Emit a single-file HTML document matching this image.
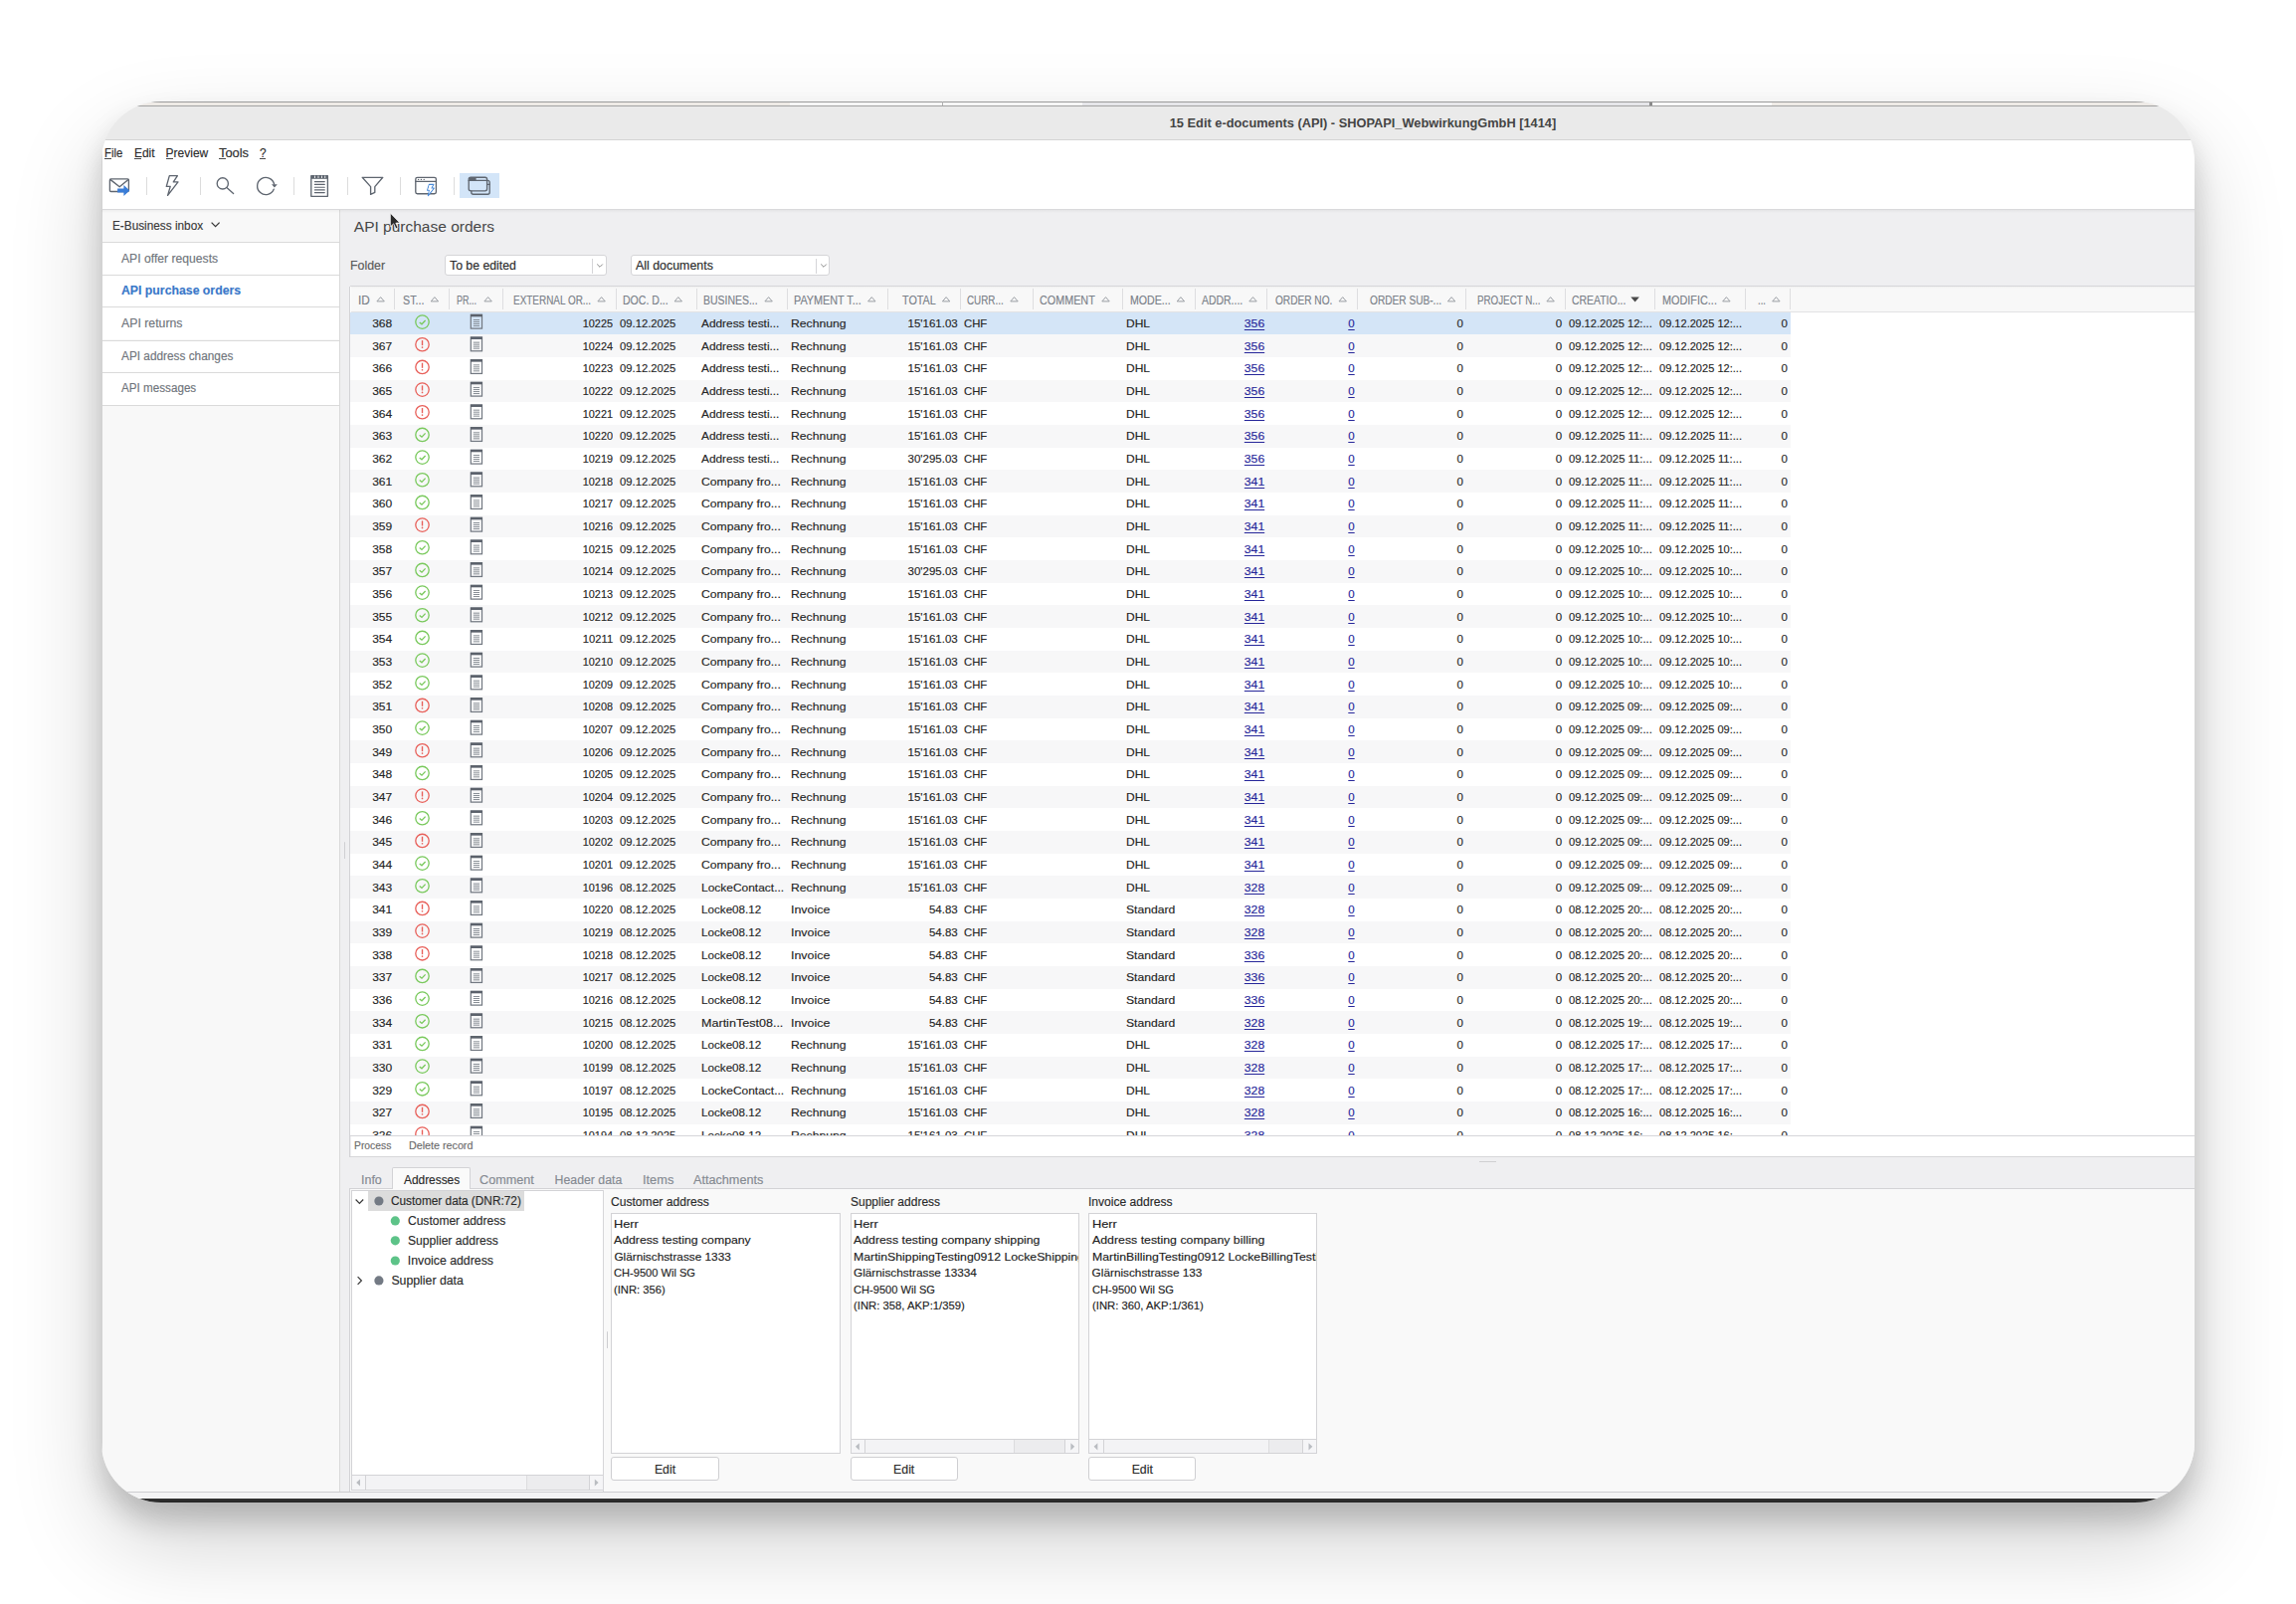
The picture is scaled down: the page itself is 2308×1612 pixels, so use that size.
<!DOCTYPE html>
<html><head><meta charset="utf-8"><title>e-documents</title>
<style>
html,body{margin:0;padding:0;}
body{width:2308px;height:1612px;position:relative;overflow:hidden;background:#ffffff;font-family:"Liberation Sans",sans-serif;}
.b{position:absolute;}
.t{position:absolute;white-space:nowrap;line-height:20px;-webkit-text-stroke:0.15px currentColor;}
#shadow{position:absolute;left:102px;top:102px;width:2104px;height:1408px;border-radius:60px;background:#eee;
 box-shadow:0 18px 28px rgba(0,0,0,0.18),0 41px 92px rgba(0,0,0,0.18);}
#win{position:absolute;left:0;top:0;width:2308px;height:1612px;clip-path:inset(102px 102px 102px 102px round 60px);}
</style></head><body>
<div id="shadow"></div>
<div id="win">
<div class="b" style="left:102.00px;top:102.00px;width:2104.00px;height:1.20px;background:#9c9c9c;"></div>
<div class="b" style="left:102.00px;top:103.20px;width:692.00px;height:2.80px;background:#eeeae6;"></div>
<div class="b" style="left:794.00px;top:103.20px;width:294.00px;height:2.80px;background:#f6f6f6;"></div>
<div class="b" style="left:1088.00px;top:103.20px;width:571.00px;height:2.80px;background:#e6e6e9;"></div>
<div class="b" style="left:1659.00px;top:103.20px;width:122.00px;height:2.80px;background:#f8f8f8;"></div>
<div class="b" style="left:1781.00px;top:103.20px;width:425.00px;height:2.80px;background:#eeeae6;"></div>
<div class="b" style="left:946.80px;top:102.00px;width:1.00px;height:5.00px;background:#b0b0b0;"></div>
<div class="b" style="left:1658.00px;top:102.50px;width:2.50px;height:4.00px;background:#8a8a8a;"></div>
<div class="b" style="left:102.00px;top:106.00px;width:2104.00px;height:1.20px;background:#a3a3a3;"></div>
<div class="b" style="left:102.00px;top:107.20px;width:2104.00px;height:33.30px;background:#eaeaea;"></div>
<div class="b" style="left:102.00px;top:140.20px;width:2104.00px;height:1.00px;background:#d4d4d4;"></div>
<div class="t" style="top:113.80px;font-size:12.8px;color:#444444;font-weight:700;left:1175.76px;-webkit-text-stroke:0;">15 Edit e-documents (API) - SHOPAPI_WebwirkungGmbH [1414]</div>
<div class="b" style="left:102.00px;top:141.00px;width:2104.00px;height:69.00px;background:#ffffff;"></div>
<div class="b" style="left:102.00px;top:209.60px;width:2104.00px;height:1.00px;background:#d9d9db;"></div>
<div class="t" style="top:144.20px;font-size:12px;color:#2c2c2c;left:105.30px;transform:scaleX(0.949);transform-origin:left center;">File</div>
<div class="b" style="left:105.30px;top:158.80px;width:7.00px;height:1.20px;background:#4a4a4a;"></div>
<div class="t" style="top:144.20px;font-size:12px;color:#2c2c2c;left:134.90px;">Edit</div>
<div class="b" style="left:134.90px;top:158.80px;width:7.00px;height:1.20px;background:#4a4a4a;"></div>
<div class="t" style="top:144.20px;font-size:12px;color:#2c2c2c;left:166.60px;">Preview</div>
<div class="b" style="left:166.60px;top:158.80px;width:7.00px;height:1.20px;background:#4a4a4a;"></div>
<div class="t" style="top:144.20px;font-size:12px;color:#2c2c2c;left:219.80px;transform:scaleX(1.073);transform-origin:left center;">Tools</div>
<div class="b" style="left:219.80px;top:158.80px;width:7.00px;height:1.20px;background:#4a4a4a;"></div>
<div class="t" style="top:144.20px;font-size:12px;color:#2c2c2c;left:260.60px;transform:scaleX(0.985);transform-origin:left center;">?</div>
<div class="b" style="left:260.60px;top:158.80px;width:6.40px;height:1.20px;background:#4a4a4a;"></div>
<div class="b" style="left:147.40px;top:178.00px;width:1.00px;height:18.00px;background:#dcdcdc;"></div>
<div class="b" style="left:200.60px;top:178.00px;width:1.00px;height:18.00px;background:#dcdcdc;"></div>
<div class="b" style="left:295.40px;top:178.00px;width:1.00px;height:18.00px;background:#dcdcdc;"></div>
<div class="b" style="left:348.50px;top:178.00px;width:1.00px;height:18.00px;background:#dcdcdc;"></div>
<div class="b" style="left:402.40px;top:178.00px;width:1.00px;height:18.00px;background:#dcdcdc;"></div>
<div class="b" style="left:455.50px;top:178.00px;width:1.00px;height:18.00px;background:#dcdcdc;"></div>
<div class="b" style="left:462.00px;top:174.20px;width:40.10px;height:24.90px;background:#d3e5f8;"></div>

<svg class="b" style="left:0;top:0" width="2308" height="1612" viewBox="0 0 2308 1612">
 <g fill="none" stroke="#5f6670" stroke-width="1.35" stroke-linejoin="round" stroke-linecap="round">
  <!-- mail -->
  <rect x="110.4" y="179.9" width="19" height="12.6" rx="1.2"/>
  <path d="M110.8 180.4 L120.2 187.8 L129 180.4"/>
  <!-- lightning -->
  <path d="M170.3 176.6 L178.4 176.6 L174.3 182.9 L179.0 182.9 L168.6 196.4 L171.2 187.4 L167.3 187.4 Z"/>
  <!-- search -->
  <circle cx="223.8" cy="184.4" r="5.6"/>
  <path d="M227.9 188.6 L234.6 194.6"/>
  <!-- refresh -->
  <path d="M275.6 185.0 A8.6 8.6 0 1 0 275.2 190.2"/>
  <!-- document -->
  <rect x="312.8" y="176.7" width="16.6" height="20.6"/>
  <path d="M316.4 182.6 H326.3 M316.4 185.4 H326.3 M316.4 188.2 H326.3 M316.4 190.9 H326.3 M316.4 193.6 H326.3" stroke-width="1.1"/>
  <!-- filter -->
  <path d="M364.2 178.3 H384.8 L376.8 187.6 V193.4 L372.6 195.4 V187.6 Z"/>
  <!-- window lightning -->
  <rect x="417.8" y="178.3" width="20.6" height="16.4" rx="1.8"/>
  <path d="M417.8 182.3 H438.4"/>
  <!-- windows -->
  <path d="M473.8 191.8 V193.2 A2 2 0 0 0 475.8 195.2 H490.2 A2 2 0 0 0 492.2 193.2 V183.2 A2 2 0 0 0 490.2 181.3 H489.6"/>
  <rect x="471.2" y="178.2" width="18.4" height="13.6" rx="2"/>
  <path d="M471.2 181.4 H489.6 M489.6 185.3 H492.2"/>
 </g>
 <g fill="#5f6670">
  <path d="M273.0 185.3 L278.8 185.3 L275.9 188.6 Z"/>
  <rect x="313" y="176.6" width="16.2" height="3.2"/>
  <circle cx="420.6" cy="180.4" r="0.7"/><circle cx="423.4" cy="180.4" r="0.7"/><circle cx="426.2" cy="180.4" r="0.7"/>
  <rect x="472" y="179" width="6.6" height="2"/>
 </g>
 <g fill="#ffffff"><rect x="316.2" y="176.6" width="0.8" height="2.4"/><rect x="319.6" y="176.6" width="0.8" height="2.4"/><rect x="323" y="176.6" width="0.8" height="2.4"/><rect x="326.4" y="176.6" width="0.8" height="2.4"/></g>
 <!-- blue arrow on mail -->
 <path fill="#3a7dd7" d="M118.1 189.4 H124.4 V185.9 L130.3 191.4 L124.4 196.9 V193.6 H118.1 Z"/>
 <!-- blue lightning -->
 <path fill="none" stroke="#4a8ad8" stroke-width="1.2" stroke-linejoin="round" d="M431.4 185.4 H435.8 L433.6 189.2 H436.2 L430.4 196.6 L431.6 191.2 H429.6 Z"/>
 <path fill="#ffffff" d="M431.6 185.9 H435 L433 189.6 H435.3 L431 195 L432 190.8 H430.2 Z"/>
</svg>
<div class="b" style="left:102.00px;top:210.50px;width:239.50px;height:1299.50px;background:#f8f8f8;"></div>
<div class="b" style="left:341.20px;top:210.50px;width:1.00px;height:1289.50px;background:#d9d9d9;"></div>
<div class="b" style="left:102.00px;top:140.00px;width:1.00px;height:1370.00px;background:#d2d2d2;"></div>
<div class="t" style="top:217.20px;font-size:12px;color:#3a3a3a;left:113.00px;transform:scaleX(0.983);transform-origin:left center;">E-Business inbox</div>
<svg class="b" style="left:211px;top:222px" width="12" height="8" viewBox="0 0 12 8"><path d="M1.6 1.6 L5.6 5.6 L9.6 1.6" fill="none" stroke="#3a3a3a" stroke-width="1.3"/></svg>
<div class="b" style="left:103.00px;top:244.30px;width:238.20px;height:31.70px;background:#ffffff;"></div>
<div class="b" style="left:103.00px;top:277.00px;width:238.20px;height:31.30px;background:#ffffff;"></div>
<div class="b" style="left:103.00px;top:309.30px;width:238.20px;height:32.20px;background:#ffffff;"></div>
<div class="b" style="left:103.00px;top:342.50px;width:238.20px;height:31.50px;background:#ffffff;"></div>
<div class="b" style="left:103.00px;top:375.00px;width:238.20px;height:31.60px;background:#ffffff;"></div>
<div class="b" style="left:103.00px;top:243.30px;width:238.20px;height:1.00px;background:#dadada;"></div>
<div class="b" style="left:103.00px;top:276.00px;width:238.20px;height:1.00px;background:#dadada;"></div>
<div class="b" style="left:103.00px;top:308.30px;width:238.20px;height:1.00px;background:#dadada;"></div>
<div class="b" style="left:103.00px;top:341.50px;width:238.20px;height:1.00px;background:#dadada;"></div>
<div class="b" style="left:103.00px;top:374.00px;width:238.20px;height:1.00px;background:#dadada;"></div>
<div class="b" style="left:103.00px;top:406.60px;width:238.20px;height:1.00px;background:#dadada;"></div>
<div class="t" style="top:250.00px;font-size:12px;color:#70757c;left:122.00px;transform:scaleX(1.014);transform-origin:left center;">API offer requests</div>
<div class="t" style="top:281.90px;font-size:12px;color:#3a78c9;font-weight:700;left:122.00px;transform:scaleX(1.023);transform-origin:left center;">API purchase orders</div>
<div class="t" style="top:315.10px;font-size:12px;color:#70757c;left:122.00px;transform:scaleX(1.025);transform-origin:left center;">API returns</div>
<div class="t" style="top:347.70px;font-size:12px;color:#70757c;left:122.00px;transform:scaleX(0.985);transform-origin:left center;">API address changes</div>
<div class="t" style="top:380.30px;font-size:12px;color:#70757c;left:122.00px;transform:scaleX(0.972);transform-origin:left center;">API messages</div>
<div class="b" style="left:342.20px;top:210.50px;width:1863.80px;height:1289.50px;background:#efeff1;"></div>
<div class="b" style="left:102.00px;top:211.00px;width:2104.00px;height:3.00px;background:linear-gradient(rgba(0,0,0,0.045),rgba(0,0,0,0));"></div>
<div class="t" style="top:217.60px;font-size:15.5px;color:#484848;left:355.80px;-webkit-text-stroke:0;">API purchase orders</div>
<div class="t" style="top:257.20px;font-size:12px;color:#5a5a5a;left:351.60px;transform:scaleX(1.030);transform-origin:left center;">Folder</div>
<div class="b" style="left:446.70px;top:256.30px;width:162.90px;height:21.20px;background:#ffffff;border:1px solid #d5d5d8;box-sizing:border-box;border-radius:3px;"></div>
<div class="b" style="left:595.40px;top:259.50px;width:1.00px;height:15.00px;background:#d5d5d8;"></div>
<svg class="b" style="left:599.4px;top:264px" width="8" height="6" viewBox="0 0 8 6"><path d="M1.2 1.5 L4 4.3 L6.8 1.5" fill="none" stroke="#8a8a8a" stroke-width="1"/></svg>
<div class="t" style="top:257.00px;font-size:12px;color:#2a2a2a;left:452.40px;transform:scaleX(1.022);transform-origin:left center;">To be edited</div>
<div class="b" style="left:633.60px;top:256.30px;width:200.70px;height:21.20px;background:#ffffff;border:1px solid #d5d5d8;box-sizing:border-box;border-radius:3px;"></div>
<div class="b" style="left:820.20px;top:259.50px;width:1.00px;height:15.00px;background:#d5d5d8;"></div>
<svg class="b" style="left:824.2px;top:264px" width="8" height="6" viewBox="0 0 8 6"><path d="M1.2 1.5 L4 4.3 L6.8 1.5" fill="none" stroke="#8a8a8a" stroke-width="1"/></svg>
<div class="t" style="top:257.00px;font-size:12px;color:#2a2a2a;left:639.30px;transform:scaleX(1.033);transform-origin:left center;">All documents</div>
<div class="b" style="left:351.60px;top:287.00px;width:1854.40px;height:854.30px;background:#ffffff;"></div>
<div class="b" style="left:351.60px;top:287.00px;width:1854.40px;height:1.00px;background:#d6d6d9;"></div>
<div class="b" style="left:352.60px;top:288.00px;width:1853.40px;height:25.00px;background:#f8f8f8;"></div>
<div class="b" style="left:352.60px;top:312.60px;width:1853.40px;height:1.00px;background:#e2e2e4;"></div>
<div class="b" style="left:352.60px;top:288.00px;width:1853.40px;height:2.00px;background:linear-gradient(rgba(0,0,0,0.035),rgba(0,0,0,0));"></div>
<div class="b" style="left:396.00px;top:290.00px;width:1.00px;height:20.60px;background:#dedee0;"></div>
<div class="b" style="left:450.80px;top:290.00px;width:1.00px;height:20.60px;background:#dedee0;"></div>
<div class="b" style="left:504.90px;top:290.00px;width:1.00px;height:20.60px;background:#dedee0;"></div>
<div class="b" style="left:618.60px;top:290.00px;width:1.00px;height:20.60px;background:#dedee0;"></div>
<div class="b" style="left:700.00px;top:290.00px;width:1.00px;height:20.60px;background:#dedee0;"></div>
<div class="b" style="left:791.00px;top:290.00px;width:1.00px;height:20.60px;background:#dedee0;"></div>
<div class="b" style="left:892.30px;top:290.00px;width:1.00px;height:20.60px;background:#dedee0;"></div>
<div class="b" style="left:965.10px;top:290.00px;width:1.00px;height:20.60px;background:#dedee0;"></div>
<div class="b" style="left:1037.50px;top:290.00px;width:1.00px;height:20.60px;background:#dedee0;"></div>
<div class="b" style="left:1128.00px;top:290.00px;width:1.00px;height:20.60px;background:#dedee0;"></div>
<div class="b" style="left:1200.80px;top:290.00px;width:1.00px;height:20.60px;background:#dedee0;"></div>
<div class="b" style="left:1273.20px;top:290.00px;width:1.00px;height:20.60px;background:#dedee0;"></div>
<div class="b" style="left:1363.90px;top:290.00px;width:1.00px;height:20.60px;background:#dedee0;"></div>
<div class="b" style="left:1472.90px;top:290.00px;width:1.00px;height:20.60px;background:#dedee0;"></div>
<div class="b" style="left:1572.50px;top:290.00px;width:1.00px;height:20.60px;background:#dedee0;"></div>
<div class="b" style="left:1663.20px;top:290.00px;width:1.00px;height:20.60px;background:#dedee0;"></div>
<div class="b" style="left:1753.60px;top:290.00px;width:1.00px;height:20.60px;background:#dedee0;"></div>
<div class="b" style="left:1799.10px;top:290.00px;width:1.00px;height:20.60px;background:#dedee0;"></div>
<div class="t" style="top:291.60px;font-size:12.2px;color:#7b8189;left:359.80px;transform:scaleX(0.966);transform-origin:left center;">ID</div>
<div class="t" style="top:291.60px;font-size:12.2px;color:#7b8189;left:405.00px;transform:scaleX(0.877);transform-origin:left center;">ST...</div>
<div class="t" style="top:291.60px;font-size:12.2px;color:#7b8189;left:459.20px;transform:scaleX(0.738);transform-origin:left center;">PR...</div>
<div class="t" style="top:291.60px;font-size:12.2px;color:#7b8189;left:515.90px;transform:scaleX(0.816);transform-origin:left center;">EXTERNAL OR...</div>
<div class="t" style="top:291.60px;font-size:12.2px;color:#7b8189;left:626.10px;transform:scaleX(0.865);transform-origin:left center;">DOC. D...</div>
<div class="t" style="top:291.60px;font-size:12.2px;color:#7b8189;left:707.20px;transform:scaleX(0.859);transform-origin:left center;">BUSINES...</div>
<div class="t" style="top:291.60px;font-size:12.2px;color:#7b8189;left:798.00px;transform:scaleX(0.887);transform-origin:left center;">PAYMENT T...</div>
<div class="t" style="top:291.60px;font-size:12.2px;color:#7b8189;left:907.00px;transform:scaleX(0.883);transform-origin:left center;">TOTAL</div>
<div class="t" style="top:291.60px;font-size:12.2px;color:#7b8189;left:972.30px;transform:scaleX(0.808);transform-origin:left center;">CURR...</div>
<div class="t" style="top:291.60px;font-size:12.2px;color:#7b8189;left:1044.80px;transform:scaleX(0.885);transform-origin:left center;">COMMENT</div>
<div class="t" style="top:291.60px;font-size:12.2px;color:#7b8189;left:1135.50px;transform:scaleX(0.871);transform-origin:left center;">MODE...</div>
<div class="t" style="top:291.60px;font-size:12.2px;color:#7b8189;left:1208.00px;transform:scaleX(0.857);transform-origin:left center;">ADDR....</div>
<div class="t" style="top:291.60px;font-size:12.2px;color:#7b8189;left:1282.40px;transform:scaleX(0.830);transform-origin:left center;">ORDER NO.</div>
<div class="t" style="top:291.60px;font-size:12.2px;color:#7b8189;left:1376.60px;transform:scaleX(0.831);transform-origin:left center;">ORDER SUB-...</div>
<div class="t" style="top:291.60px;font-size:12.2px;color:#7b8189;left:1485.20px;transform:scaleX(0.803);transform-origin:left center;">PROJECT N...</div>
<div class="t" style="top:291.60px;font-size:12.2px;color:#7b8189;left:1579.70px;transform:scaleX(0.857);transform-origin:left center;">CREATIO...</div>
<div class="t" style="top:291.60px;font-size:12.2px;color:#7b8189;left:1670.60px;transform:scaleX(0.891);transform-origin:left center;">MODIFIC...</div>
<div class="t" style="top:291.60px;font-size:12.2px;color:#7b8189;left:1766.90px;transform:scaleX(0.779);transform-origin:left center;">...</div>
<svg class="b" style="left:0;top:0" width="2308" height="1612" viewBox="0 0 2308 1612"><path d="M378.9 302.9 H386.3 L382.6 298.6 Z" fill="none" stroke="#9a9ea4" stroke-width="1"/><path d="M433.2 302.9 H440.6 L436.9 298.6 Z" fill="none" stroke="#9a9ea4" stroke-width="1"/><path d="M486.9 302.9 H494.3 L490.6 298.6 Z" fill="none" stroke="#9a9ea4" stroke-width="1"/><path d="M600.9 302.9 H608.3 L604.6 298.6 Z" fill="none" stroke="#9a9ea4" stroke-width="1"/><path d="M678.1 302.9 H685.5 L681.8 298.6 Z" fill="none" stroke="#9a9ea4" stroke-width="1"/><path d="M768.9 302.9 H776.3 L772.6 298.6 Z" fill="none" stroke="#9a9ea4" stroke-width="1"/><path d="M872.6 302.9 H880.0 L876.3 298.6 Z" fill="none" stroke="#9a9ea4" stroke-width="1"/><path d="M947.4 302.9 H954.8 L951.1 298.6 Z" fill="none" stroke="#9a9ea4" stroke-width="1"/><path d="M1015.8 302.9 H1023.2 L1019.5 298.6 Z" fill="none" stroke="#9a9ea4" stroke-width="1"/><path d="M1107.8 302.9 H1115.2 L1111.5 298.6 Z" fill="none" stroke="#9a9ea4" stroke-width="1"/><path d="M1183.2 302.9 H1190.6 L1186.9 298.6 Z" fill="none" stroke="#9a9ea4" stroke-width="1"/><path d="M1255.8 302.9 H1263.2 L1259.5 298.6 Z" fill="none" stroke="#9a9ea4" stroke-width="1"/><path d="M1346.0 302.9 H1353.4 L1349.7 298.6 Z" fill="none" stroke="#9a9ea4" stroke-width="1"/><path d="M1455.4 302.9 H1462.8 L1459.1 298.6 Z" fill="none" stroke="#9a9ea4" stroke-width="1"/><path d="M1554.9 302.9 H1562.3 L1558.6 298.6 Z" fill="none" stroke="#9a9ea4" stroke-width="1"/><path d="M1639.3 298.4 H1647.9 L1643.6 303.4 Z" fill="#4a4a4a"/><path d="M1731.7 302.9 H1739.1 L1735.4 298.6 Z" fill="none" stroke="#9a9ea4" stroke-width="1"/><path d="M1781.7 302.9 H1789.1 L1785.4 298.6 Z" fill="none" stroke="#9a9ea4" stroke-width="1"/></svg>
<div class="b" style="left:352px;top:313px;width:1854px;height:828.3px;overflow:hidden">
<div class="b" style="left:-352px;top:-313px;width:2308px;height:1612px">
<div class="b" style="left:352.00px;top:313.70px;width:1448.20px;height:22.67px;background:#d4e5f7;"></div>
<div class="t" style="top:315.00px;font-size:11.5px;color:#262626;left:375.01px;transform:scaleX(1.044);transform-origin:right center;">368</div>
<div class="t" style="top:315.00px;font-size:11.5px;color:#262626;left:584.02px;transform:scaleX(0.946);transform-origin:right center;">10225</div>
<div class="t" style="top:315.00px;font-size:11.5px;color:#262626;left:623.00px;transform:scaleX(0.978);transform-origin:left center;">09.12.2025</div>
<div class="t" style="top:315.00px;font-size:11.5px;color:#262626;left:704.60px;transform:scaleX(1.031);transform-origin:left center;">Address testi...</div>
<div class="t" style="top:315.00px;font-size:11.5px;color:#262626;left:795.00px;transform:scaleX(1.061);transform-origin:left center;">Rechnung</div>
<div class="t" style="top:315.00px;font-size:11.5px;color:#262626;left:912.53px;">15'161.03</div>
<div class="t" style="top:315.00px;font-size:11.5px;color:#262626;left:969.20px;transform:scaleX(0.981);transform-origin:left center;">CHF</div>
<div class="t" style="top:315.00px;font-size:11.5px;color:#262626;left:1132.40px;transform:scaleX(1.044);transform-origin:left center;">DHL</div>
<div class="t" style="top:315.00px;font-size:11.5px;color:#27279a;left:1252.41px;transform:scaleX(1.061);transform-origin:right center;text-decoration:underline;text-underline-offset:1.6px;text-decoration-thickness:1.1px;">356</div>
<div class="t" style="top:315.00px;font-size:11.5px;color:#27279a;left:1355.29px;text-decoration:underline;text-underline-offset:1.6px;text-decoration-thickness:1.1px;">0</div>
<div class="t" style="top:315.00px;font-size:11.5px;color:#262626;left:1464.39px;">0</div>
<div class="t" style="top:315.00px;font-size:11.5px;color:#262626;left:1563.79px;">0</div>
<div class="t" style="top:315.00px;font-size:11.5px;color:#262626;left:1576.60px;transform:scaleX(0.970);transform-origin:left center;">09.12.2025 12:...</div>
<div class="t" style="top:315.00px;font-size:11.5px;color:#262626;left:1667.60px;transform:scaleX(0.961);transform-origin:left center;">09.12.2025 12:...</div>
<div class="t" style="top:315.00px;font-size:11.5px;color:#262626;left:1790.59px;">0</div>
<div class="b" style="left:352.00px;top:336.37px;width:1448.20px;height:22.67px;background:#f7f7f8;"></div>
<div class="t" style="top:337.67px;font-size:11.5px;color:#262626;left:375.01px;transform:scaleX(1.044);transform-origin:right center;">367</div>
<div class="t" style="top:337.67px;font-size:11.5px;color:#262626;left:584.02px;transform:scaleX(0.946);transform-origin:right center;">10224</div>
<div class="t" style="top:337.67px;font-size:11.5px;color:#262626;left:623.00px;transform:scaleX(0.978);transform-origin:left center;">09.12.2025</div>
<div class="t" style="top:337.67px;font-size:11.5px;color:#262626;left:704.60px;transform:scaleX(1.031);transform-origin:left center;">Address testi...</div>
<div class="t" style="top:337.67px;font-size:11.5px;color:#262626;left:795.00px;transform:scaleX(1.061);transform-origin:left center;">Rechnung</div>
<div class="t" style="top:337.67px;font-size:11.5px;color:#262626;left:912.53px;">15'161.03</div>
<div class="t" style="top:337.67px;font-size:11.5px;color:#262626;left:969.20px;transform:scaleX(0.981);transform-origin:left center;">CHF</div>
<div class="t" style="top:337.67px;font-size:11.5px;color:#262626;left:1132.40px;transform:scaleX(1.044);transform-origin:left center;">DHL</div>
<div class="t" style="top:337.67px;font-size:11.5px;color:#27279a;left:1252.41px;transform:scaleX(1.061);transform-origin:right center;text-decoration:underline;text-underline-offset:1.6px;text-decoration-thickness:1.1px;">356</div>
<div class="t" style="top:337.67px;font-size:11.5px;color:#27279a;left:1355.29px;text-decoration:underline;text-underline-offset:1.6px;text-decoration-thickness:1.1px;">0</div>
<div class="t" style="top:337.67px;font-size:11.5px;color:#262626;left:1464.39px;">0</div>
<div class="t" style="top:337.67px;font-size:11.5px;color:#262626;left:1563.79px;">0</div>
<div class="t" style="top:337.67px;font-size:11.5px;color:#262626;left:1576.60px;transform:scaleX(0.970);transform-origin:left center;">09.12.2025 12:...</div>
<div class="t" style="top:337.67px;font-size:11.5px;color:#262626;left:1667.60px;transform:scaleX(0.961);transform-origin:left center;">09.12.2025 12:...</div>
<div class="t" style="top:337.67px;font-size:11.5px;color:#262626;left:1790.59px;">0</div>
<div class="t" style="top:360.33px;font-size:11.5px;color:#262626;left:375.01px;transform:scaleX(1.044);transform-origin:right center;">366</div>
<div class="t" style="top:360.33px;font-size:11.5px;color:#262626;left:584.02px;transform:scaleX(0.946);transform-origin:right center;">10223</div>
<div class="t" style="top:360.33px;font-size:11.5px;color:#262626;left:623.00px;transform:scaleX(0.978);transform-origin:left center;">09.12.2025</div>
<div class="t" style="top:360.33px;font-size:11.5px;color:#262626;left:704.60px;transform:scaleX(1.031);transform-origin:left center;">Address testi...</div>
<div class="t" style="top:360.33px;font-size:11.5px;color:#262626;left:795.00px;transform:scaleX(1.061);transform-origin:left center;">Rechnung</div>
<div class="t" style="top:360.33px;font-size:11.5px;color:#262626;left:912.53px;">15'161.03</div>
<div class="t" style="top:360.33px;font-size:11.5px;color:#262626;left:969.20px;transform:scaleX(0.981);transform-origin:left center;">CHF</div>
<div class="t" style="top:360.33px;font-size:11.5px;color:#262626;left:1132.40px;transform:scaleX(1.044);transform-origin:left center;">DHL</div>
<div class="t" style="top:360.33px;font-size:11.5px;color:#27279a;left:1252.41px;transform:scaleX(1.061);transform-origin:right center;text-decoration:underline;text-underline-offset:1.6px;text-decoration-thickness:1.1px;">356</div>
<div class="t" style="top:360.33px;font-size:11.5px;color:#27279a;left:1355.29px;text-decoration:underline;text-underline-offset:1.6px;text-decoration-thickness:1.1px;">0</div>
<div class="t" style="top:360.33px;font-size:11.5px;color:#262626;left:1464.39px;">0</div>
<div class="t" style="top:360.33px;font-size:11.5px;color:#262626;left:1563.79px;">0</div>
<div class="t" style="top:360.33px;font-size:11.5px;color:#262626;left:1576.60px;transform:scaleX(0.970);transform-origin:left center;">09.12.2025 12:...</div>
<div class="t" style="top:360.33px;font-size:11.5px;color:#262626;left:1667.60px;transform:scaleX(0.961);transform-origin:left center;">09.12.2025 12:...</div>
<div class="t" style="top:360.33px;font-size:11.5px;color:#262626;left:1790.59px;">0</div>
<div class="b" style="left:352.00px;top:381.70px;width:1448.20px;height:22.67px;background:#f7f7f8;"></div>
<div class="t" style="top:383.00px;font-size:11.5px;color:#262626;left:375.01px;transform:scaleX(1.044);transform-origin:right center;">365</div>
<div class="t" style="top:383.00px;font-size:11.5px;color:#262626;left:584.02px;transform:scaleX(0.946);transform-origin:right center;">10222</div>
<div class="t" style="top:383.00px;font-size:11.5px;color:#262626;left:623.00px;transform:scaleX(0.978);transform-origin:left center;">09.12.2025</div>
<div class="t" style="top:383.00px;font-size:11.5px;color:#262626;left:704.60px;transform:scaleX(1.031);transform-origin:left center;">Address testi...</div>
<div class="t" style="top:383.00px;font-size:11.5px;color:#262626;left:795.00px;transform:scaleX(1.061);transform-origin:left center;">Rechnung</div>
<div class="t" style="top:383.00px;font-size:11.5px;color:#262626;left:912.53px;">15'161.03</div>
<div class="t" style="top:383.00px;font-size:11.5px;color:#262626;left:969.20px;transform:scaleX(0.981);transform-origin:left center;">CHF</div>
<div class="t" style="top:383.00px;font-size:11.5px;color:#262626;left:1132.40px;transform:scaleX(1.044);transform-origin:left center;">DHL</div>
<div class="t" style="top:383.00px;font-size:11.5px;color:#27279a;left:1252.41px;transform:scaleX(1.061);transform-origin:right center;text-decoration:underline;text-underline-offset:1.6px;text-decoration-thickness:1.1px;">356</div>
<div class="t" style="top:383.00px;font-size:11.5px;color:#27279a;left:1355.29px;text-decoration:underline;text-underline-offset:1.6px;text-decoration-thickness:1.1px;">0</div>
<div class="t" style="top:383.00px;font-size:11.5px;color:#262626;left:1464.39px;">0</div>
<div class="t" style="top:383.00px;font-size:11.5px;color:#262626;left:1563.79px;">0</div>
<div class="t" style="top:383.00px;font-size:11.5px;color:#262626;left:1576.60px;transform:scaleX(0.970);transform-origin:left center;">09.12.2025 12:...</div>
<div class="t" style="top:383.00px;font-size:11.5px;color:#262626;left:1667.60px;transform:scaleX(0.961);transform-origin:left center;">09.12.2025 12:...</div>
<div class="t" style="top:383.00px;font-size:11.5px;color:#262626;left:1790.59px;">0</div>
<div class="t" style="top:405.67px;font-size:11.5px;color:#262626;left:375.01px;transform:scaleX(1.044);transform-origin:right center;">364</div>
<div class="t" style="top:405.67px;font-size:11.5px;color:#262626;left:584.02px;transform:scaleX(0.946);transform-origin:right center;">10221</div>
<div class="t" style="top:405.67px;font-size:11.5px;color:#262626;left:623.00px;transform:scaleX(0.978);transform-origin:left center;">09.12.2025</div>
<div class="t" style="top:405.67px;font-size:11.5px;color:#262626;left:704.60px;transform:scaleX(1.031);transform-origin:left center;">Address testi...</div>
<div class="t" style="top:405.67px;font-size:11.5px;color:#262626;left:795.00px;transform:scaleX(1.061);transform-origin:left center;">Rechnung</div>
<div class="t" style="top:405.67px;font-size:11.5px;color:#262626;left:912.53px;">15'161.03</div>
<div class="t" style="top:405.67px;font-size:11.5px;color:#262626;left:969.20px;transform:scaleX(0.981);transform-origin:left center;">CHF</div>
<div class="t" style="top:405.67px;font-size:11.5px;color:#262626;left:1132.40px;transform:scaleX(1.044);transform-origin:left center;">DHL</div>
<div class="t" style="top:405.67px;font-size:11.5px;color:#27279a;left:1252.41px;transform:scaleX(1.061);transform-origin:right center;text-decoration:underline;text-underline-offset:1.6px;text-decoration-thickness:1.1px;">356</div>
<div class="t" style="top:405.67px;font-size:11.5px;color:#27279a;left:1355.29px;text-decoration:underline;text-underline-offset:1.6px;text-decoration-thickness:1.1px;">0</div>
<div class="t" style="top:405.67px;font-size:11.5px;color:#262626;left:1464.39px;">0</div>
<div class="t" style="top:405.67px;font-size:11.5px;color:#262626;left:1563.79px;">0</div>
<div class="t" style="top:405.67px;font-size:11.5px;color:#262626;left:1576.60px;transform:scaleX(0.970);transform-origin:left center;">09.12.2025 12:...</div>
<div class="t" style="top:405.67px;font-size:11.5px;color:#262626;left:1667.60px;transform:scaleX(0.961);transform-origin:left center;">09.12.2025 12:...</div>
<div class="t" style="top:405.67px;font-size:11.5px;color:#262626;left:1790.59px;">0</div>
<div class="b" style="left:352.00px;top:427.03px;width:1448.20px;height:22.67px;background:#f7f7f8;"></div>
<div class="t" style="top:428.33px;font-size:11.5px;color:#262626;left:375.01px;transform:scaleX(1.044);transform-origin:right center;">363</div>
<div class="t" style="top:428.33px;font-size:11.5px;color:#262626;left:584.02px;transform:scaleX(0.946);transform-origin:right center;">10220</div>
<div class="t" style="top:428.33px;font-size:11.5px;color:#262626;left:623.00px;transform:scaleX(0.978);transform-origin:left center;">09.12.2025</div>
<div class="t" style="top:428.33px;font-size:11.5px;color:#262626;left:704.60px;transform:scaleX(1.031);transform-origin:left center;">Address testi...</div>
<div class="t" style="top:428.33px;font-size:11.5px;color:#262626;left:795.00px;transform:scaleX(1.061);transform-origin:left center;">Rechnung</div>
<div class="t" style="top:428.33px;font-size:11.5px;color:#262626;left:912.53px;">15'161.03</div>
<div class="t" style="top:428.33px;font-size:11.5px;color:#262626;left:969.20px;transform:scaleX(0.981);transform-origin:left center;">CHF</div>
<div class="t" style="top:428.33px;font-size:11.5px;color:#262626;left:1132.40px;transform:scaleX(1.044);transform-origin:left center;">DHL</div>
<div class="t" style="top:428.33px;font-size:11.5px;color:#27279a;left:1252.41px;transform:scaleX(1.061);transform-origin:right center;text-decoration:underline;text-underline-offset:1.6px;text-decoration-thickness:1.1px;">356</div>
<div class="t" style="top:428.33px;font-size:11.5px;color:#27279a;left:1355.29px;text-decoration:underline;text-underline-offset:1.6px;text-decoration-thickness:1.1px;">0</div>
<div class="t" style="top:428.33px;font-size:11.5px;color:#262626;left:1464.39px;">0</div>
<div class="t" style="top:428.33px;font-size:11.5px;color:#262626;left:1563.79px;">0</div>
<div class="t" style="top:428.33px;font-size:11.5px;color:#262626;left:1576.60px;transform:scaleX(0.980);transform-origin:left center;">09.12.2025 11:...</div>
<div class="t" style="top:428.33px;font-size:11.5px;color:#262626;left:1667.60px;transform:scaleX(0.971);transform-origin:left center;">09.12.2025 11:...</div>
<div class="t" style="top:428.33px;font-size:11.5px;color:#262626;left:1790.59px;">0</div>
<div class="t" style="top:451.00px;font-size:11.5px;color:#262626;left:375.01px;transform:scaleX(1.044);transform-origin:right center;">362</div>
<div class="t" style="top:451.00px;font-size:11.5px;color:#262626;left:584.02px;transform:scaleX(0.946);transform-origin:right center;">10219</div>
<div class="t" style="top:451.00px;font-size:11.5px;color:#262626;left:623.00px;transform:scaleX(0.978);transform-origin:left center;">09.12.2025</div>
<div class="t" style="top:451.00px;font-size:11.5px;color:#262626;left:704.60px;transform:scaleX(1.031);transform-origin:left center;">Address testi...</div>
<div class="t" style="top:451.00px;font-size:11.5px;color:#262626;left:795.00px;transform:scaleX(1.061);transform-origin:left center;">Rechnung</div>
<div class="t" style="top:451.00px;font-size:11.5px;color:#262626;left:912.53px;">30'295.03</div>
<div class="t" style="top:451.00px;font-size:11.5px;color:#262626;left:969.20px;transform:scaleX(0.981);transform-origin:left center;">CHF</div>
<div class="t" style="top:451.00px;font-size:11.5px;color:#262626;left:1132.40px;transform:scaleX(1.044);transform-origin:left center;">DHL</div>
<div class="t" style="top:451.00px;font-size:11.5px;color:#27279a;left:1252.41px;transform:scaleX(1.061);transform-origin:right center;text-decoration:underline;text-underline-offset:1.6px;text-decoration-thickness:1.1px;">356</div>
<div class="t" style="top:451.00px;font-size:11.5px;color:#27279a;left:1355.29px;text-decoration:underline;text-underline-offset:1.6px;text-decoration-thickness:1.1px;">0</div>
<div class="t" style="top:451.00px;font-size:11.5px;color:#262626;left:1464.39px;">0</div>
<div class="t" style="top:451.00px;font-size:11.5px;color:#262626;left:1563.79px;">0</div>
<div class="t" style="top:451.00px;font-size:11.5px;color:#262626;left:1576.60px;transform:scaleX(0.980);transform-origin:left center;">09.12.2025 11:...</div>
<div class="t" style="top:451.00px;font-size:11.5px;color:#262626;left:1667.60px;transform:scaleX(0.971);transform-origin:left center;">09.12.2025 11:...</div>
<div class="t" style="top:451.00px;font-size:11.5px;color:#262626;left:1790.59px;">0</div>
<div class="b" style="left:352.00px;top:472.37px;width:1448.20px;height:22.67px;background:#f7f7f8;"></div>
<div class="t" style="top:473.67px;font-size:11.5px;color:#262626;left:375.01px;transform:scaleX(1.044);transform-origin:right center;">361</div>
<div class="t" style="top:473.67px;font-size:11.5px;color:#262626;left:584.02px;transform:scaleX(0.946);transform-origin:right center;">10218</div>
<div class="t" style="top:473.67px;font-size:11.5px;color:#262626;left:623.00px;transform:scaleX(0.978);transform-origin:left center;">09.12.2025</div>
<div class="t" style="top:473.67px;font-size:11.5px;color:#262626;left:704.60px;transform:scaleX(1.059);transform-origin:left center;">Company fro...</div>
<div class="t" style="top:473.67px;font-size:11.5px;color:#262626;left:795.00px;transform:scaleX(1.061);transform-origin:left center;">Rechnung</div>
<div class="t" style="top:473.67px;font-size:11.5px;color:#262626;left:912.53px;">15'161.03</div>
<div class="t" style="top:473.67px;font-size:11.5px;color:#262626;left:969.20px;transform:scaleX(0.981);transform-origin:left center;">CHF</div>
<div class="t" style="top:473.67px;font-size:11.5px;color:#262626;left:1132.40px;transform:scaleX(1.044);transform-origin:left center;">DHL</div>
<div class="t" style="top:473.67px;font-size:11.5px;color:#27279a;left:1252.41px;transform:scaleX(1.061);transform-origin:right center;text-decoration:underline;text-underline-offset:1.6px;text-decoration-thickness:1.1px;">341</div>
<div class="t" style="top:473.67px;font-size:11.5px;color:#27279a;left:1355.29px;text-decoration:underline;text-underline-offset:1.6px;text-decoration-thickness:1.1px;">0</div>
<div class="t" style="top:473.67px;font-size:11.5px;color:#262626;left:1464.39px;">0</div>
<div class="t" style="top:473.67px;font-size:11.5px;color:#262626;left:1563.79px;">0</div>
<div class="t" style="top:473.67px;font-size:11.5px;color:#262626;left:1576.60px;transform:scaleX(0.980);transform-origin:left center;">09.12.2025 11:...</div>
<div class="t" style="top:473.67px;font-size:11.5px;color:#262626;left:1667.60px;transform:scaleX(0.971);transform-origin:left center;">09.12.2025 11:...</div>
<div class="t" style="top:473.67px;font-size:11.5px;color:#262626;left:1790.59px;">0</div>
<div class="t" style="top:496.34px;font-size:11.5px;color:#262626;left:375.01px;transform:scaleX(1.044);transform-origin:right center;">360</div>
<div class="t" style="top:496.34px;font-size:11.5px;color:#262626;left:584.02px;transform:scaleX(0.946);transform-origin:right center;">10217</div>
<div class="t" style="top:496.34px;font-size:11.5px;color:#262626;left:623.00px;transform:scaleX(0.978);transform-origin:left center;">09.12.2025</div>
<div class="t" style="top:496.34px;font-size:11.5px;color:#262626;left:704.60px;transform:scaleX(1.059);transform-origin:left center;">Company fro...</div>
<div class="t" style="top:496.34px;font-size:11.5px;color:#262626;left:795.00px;transform:scaleX(1.061);transform-origin:left center;">Rechnung</div>
<div class="t" style="top:496.34px;font-size:11.5px;color:#262626;left:912.53px;">15'161.03</div>
<div class="t" style="top:496.34px;font-size:11.5px;color:#262626;left:969.20px;transform:scaleX(0.981);transform-origin:left center;">CHF</div>
<div class="t" style="top:496.34px;font-size:11.5px;color:#262626;left:1132.40px;transform:scaleX(1.044);transform-origin:left center;">DHL</div>
<div class="t" style="top:496.34px;font-size:11.5px;color:#27279a;left:1252.41px;transform:scaleX(1.061);transform-origin:right center;text-decoration:underline;text-underline-offset:1.6px;text-decoration-thickness:1.1px;">341</div>
<div class="t" style="top:496.34px;font-size:11.5px;color:#27279a;left:1355.29px;text-decoration:underline;text-underline-offset:1.6px;text-decoration-thickness:1.1px;">0</div>
<div class="t" style="top:496.34px;font-size:11.5px;color:#262626;left:1464.39px;">0</div>
<div class="t" style="top:496.34px;font-size:11.5px;color:#262626;left:1563.79px;">0</div>
<div class="t" style="top:496.34px;font-size:11.5px;color:#262626;left:1576.60px;transform:scaleX(0.980);transform-origin:left center;">09.12.2025 11:...</div>
<div class="t" style="top:496.34px;font-size:11.5px;color:#262626;left:1667.60px;transform:scaleX(0.971);transform-origin:left center;">09.12.2025 11:...</div>
<div class="t" style="top:496.34px;font-size:11.5px;color:#262626;left:1790.59px;">0</div>
<div class="b" style="left:352.00px;top:517.70px;width:1448.20px;height:22.67px;background:#f7f7f8;"></div>
<div class="t" style="top:519.00px;font-size:11.5px;color:#262626;left:375.01px;transform:scaleX(1.044);transform-origin:right center;">359</div>
<div class="t" style="top:519.00px;font-size:11.5px;color:#262626;left:584.02px;transform:scaleX(0.946);transform-origin:right center;">10216</div>
<div class="t" style="top:519.00px;font-size:11.5px;color:#262626;left:623.00px;transform:scaleX(0.978);transform-origin:left center;">09.12.2025</div>
<div class="t" style="top:519.00px;font-size:11.5px;color:#262626;left:704.60px;transform:scaleX(1.059);transform-origin:left center;">Company fro...</div>
<div class="t" style="top:519.00px;font-size:11.5px;color:#262626;left:795.00px;transform:scaleX(1.061);transform-origin:left center;">Rechnung</div>
<div class="t" style="top:519.00px;font-size:11.5px;color:#262626;left:912.53px;">15'161.03</div>
<div class="t" style="top:519.00px;font-size:11.5px;color:#262626;left:969.20px;transform:scaleX(0.981);transform-origin:left center;">CHF</div>
<div class="t" style="top:519.00px;font-size:11.5px;color:#262626;left:1132.40px;transform:scaleX(1.044);transform-origin:left center;">DHL</div>
<div class="t" style="top:519.00px;font-size:11.5px;color:#27279a;left:1252.41px;transform:scaleX(1.061);transform-origin:right center;text-decoration:underline;text-underline-offset:1.6px;text-decoration-thickness:1.1px;">341</div>
<div class="t" style="top:519.00px;font-size:11.5px;color:#27279a;left:1355.29px;text-decoration:underline;text-underline-offset:1.6px;text-decoration-thickness:1.1px;">0</div>
<div class="t" style="top:519.00px;font-size:11.5px;color:#262626;left:1464.39px;">0</div>
<div class="t" style="top:519.00px;font-size:11.5px;color:#262626;left:1563.79px;">0</div>
<div class="t" style="top:519.00px;font-size:11.5px;color:#262626;left:1576.60px;transform:scaleX(0.980);transform-origin:left center;">09.12.2025 11:...</div>
<div class="t" style="top:519.00px;font-size:11.5px;color:#262626;left:1667.60px;transform:scaleX(0.971);transform-origin:left center;">09.12.2025 11:...</div>
<div class="t" style="top:519.00px;font-size:11.5px;color:#262626;left:1790.59px;">0</div>
<div class="t" style="top:541.67px;font-size:11.5px;color:#262626;left:375.01px;transform:scaleX(1.044);transform-origin:right center;">358</div>
<div class="t" style="top:541.67px;font-size:11.5px;color:#262626;left:584.02px;transform:scaleX(0.946);transform-origin:right center;">10215</div>
<div class="t" style="top:541.67px;font-size:11.5px;color:#262626;left:623.00px;transform:scaleX(0.978);transform-origin:left center;">09.12.2025</div>
<div class="t" style="top:541.67px;font-size:11.5px;color:#262626;left:704.60px;transform:scaleX(1.059);transform-origin:left center;">Company fro...</div>
<div class="t" style="top:541.67px;font-size:11.5px;color:#262626;left:795.00px;transform:scaleX(1.061);transform-origin:left center;">Rechnung</div>
<div class="t" style="top:541.67px;font-size:11.5px;color:#262626;left:912.53px;">15'161.03</div>
<div class="t" style="top:541.67px;font-size:11.5px;color:#262626;left:969.20px;transform:scaleX(0.981);transform-origin:left center;">CHF</div>
<div class="t" style="top:541.67px;font-size:11.5px;color:#262626;left:1132.40px;transform:scaleX(1.044);transform-origin:left center;">DHL</div>
<div class="t" style="top:541.67px;font-size:11.5px;color:#27279a;left:1252.41px;transform:scaleX(1.061);transform-origin:right center;text-decoration:underline;text-underline-offset:1.6px;text-decoration-thickness:1.1px;">341</div>
<div class="t" style="top:541.67px;font-size:11.5px;color:#27279a;left:1355.29px;text-decoration:underline;text-underline-offset:1.6px;text-decoration-thickness:1.1px;">0</div>
<div class="t" style="top:541.67px;font-size:11.5px;color:#262626;left:1464.39px;">0</div>
<div class="t" style="top:541.67px;font-size:11.5px;color:#262626;left:1563.79px;">0</div>
<div class="t" style="top:541.67px;font-size:11.5px;color:#262626;left:1576.60px;transform:scaleX(0.970);transform-origin:left center;">09.12.2025 10:...</div>
<div class="t" style="top:541.67px;font-size:11.5px;color:#262626;left:1667.60px;transform:scaleX(0.961);transform-origin:left center;">09.12.2025 10:...</div>
<div class="t" style="top:541.67px;font-size:11.5px;color:#262626;left:1790.59px;">0</div>
<div class="b" style="left:352.00px;top:563.04px;width:1448.20px;height:22.67px;background:#f7f7f8;"></div>
<div class="t" style="top:564.34px;font-size:11.5px;color:#262626;left:375.01px;transform:scaleX(1.044);transform-origin:right center;">357</div>
<div class="t" style="top:564.34px;font-size:11.5px;color:#262626;left:584.02px;transform:scaleX(0.946);transform-origin:right center;">10214</div>
<div class="t" style="top:564.34px;font-size:11.5px;color:#262626;left:623.00px;transform:scaleX(0.978);transform-origin:left center;">09.12.2025</div>
<div class="t" style="top:564.34px;font-size:11.5px;color:#262626;left:704.60px;transform:scaleX(1.059);transform-origin:left center;">Company fro...</div>
<div class="t" style="top:564.34px;font-size:11.5px;color:#262626;left:795.00px;transform:scaleX(1.061);transform-origin:left center;">Rechnung</div>
<div class="t" style="top:564.34px;font-size:11.5px;color:#262626;left:912.53px;">30'295.03</div>
<div class="t" style="top:564.34px;font-size:11.5px;color:#262626;left:969.20px;transform:scaleX(0.981);transform-origin:left center;">CHF</div>
<div class="t" style="top:564.34px;font-size:11.5px;color:#262626;left:1132.40px;transform:scaleX(1.044);transform-origin:left center;">DHL</div>
<div class="t" style="top:564.34px;font-size:11.5px;color:#27279a;left:1252.41px;transform:scaleX(1.061);transform-origin:right center;text-decoration:underline;text-underline-offset:1.6px;text-decoration-thickness:1.1px;">341</div>
<div class="t" style="top:564.34px;font-size:11.5px;color:#27279a;left:1355.29px;text-decoration:underline;text-underline-offset:1.6px;text-decoration-thickness:1.1px;">0</div>
<div class="t" style="top:564.34px;font-size:11.5px;color:#262626;left:1464.39px;">0</div>
<div class="t" style="top:564.34px;font-size:11.5px;color:#262626;left:1563.79px;">0</div>
<div class="t" style="top:564.34px;font-size:11.5px;color:#262626;left:1576.60px;transform:scaleX(0.970);transform-origin:left center;">09.12.2025 10:...</div>
<div class="t" style="top:564.34px;font-size:11.5px;color:#262626;left:1667.60px;transform:scaleX(0.961);transform-origin:left center;">09.12.2025 10:...</div>
<div class="t" style="top:564.34px;font-size:11.5px;color:#262626;left:1790.59px;">0</div>
<div class="t" style="top:587.00px;font-size:11.5px;color:#262626;left:375.01px;transform:scaleX(1.044);transform-origin:right center;">356</div>
<div class="t" style="top:587.00px;font-size:11.5px;color:#262626;left:584.02px;transform:scaleX(0.946);transform-origin:right center;">10213</div>
<div class="t" style="top:587.00px;font-size:11.5px;color:#262626;left:623.00px;transform:scaleX(0.978);transform-origin:left center;">09.12.2025</div>
<div class="t" style="top:587.00px;font-size:11.5px;color:#262626;left:704.60px;transform:scaleX(1.059);transform-origin:left center;">Company fro...</div>
<div class="t" style="top:587.00px;font-size:11.5px;color:#262626;left:795.00px;transform:scaleX(1.061);transform-origin:left center;">Rechnung</div>
<div class="t" style="top:587.00px;font-size:11.5px;color:#262626;left:912.53px;">15'161.03</div>
<div class="t" style="top:587.00px;font-size:11.5px;color:#262626;left:969.20px;transform:scaleX(0.981);transform-origin:left center;">CHF</div>
<div class="t" style="top:587.00px;font-size:11.5px;color:#262626;left:1132.40px;transform:scaleX(1.044);transform-origin:left center;">DHL</div>
<div class="t" style="top:587.00px;font-size:11.5px;color:#27279a;left:1252.41px;transform:scaleX(1.061);transform-origin:right center;text-decoration:underline;text-underline-offset:1.6px;text-decoration-thickness:1.1px;">341</div>
<div class="t" style="top:587.00px;font-size:11.5px;color:#27279a;left:1355.29px;text-decoration:underline;text-underline-offset:1.6px;text-decoration-thickness:1.1px;">0</div>
<div class="t" style="top:587.00px;font-size:11.5px;color:#262626;left:1464.39px;">0</div>
<div class="t" style="top:587.00px;font-size:11.5px;color:#262626;left:1563.79px;">0</div>
<div class="t" style="top:587.00px;font-size:11.5px;color:#262626;left:1576.60px;transform:scaleX(0.970);transform-origin:left center;">09.12.2025 10:...</div>
<div class="t" style="top:587.00px;font-size:11.5px;color:#262626;left:1667.60px;transform:scaleX(0.961);transform-origin:left center;">09.12.2025 10:...</div>
<div class="t" style="top:587.00px;font-size:11.5px;color:#262626;left:1790.59px;">0</div>
<div class="b" style="left:352.00px;top:608.37px;width:1448.20px;height:22.67px;background:#f7f7f8;"></div>
<div class="t" style="top:609.67px;font-size:11.5px;color:#262626;left:375.01px;transform:scaleX(1.044);transform-origin:right center;">355</div>
<div class="t" style="top:609.67px;font-size:11.5px;color:#262626;left:584.02px;transform:scaleX(0.946);transform-origin:right center;">10212</div>
<div class="t" style="top:609.67px;font-size:11.5px;color:#262626;left:623.00px;transform:scaleX(0.978);transform-origin:left center;">09.12.2025</div>
<div class="t" style="top:609.67px;font-size:11.5px;color:#262626;left:704.60px;transform:scaleX(1.059);transform-origin:left center;">Company fro...</div>
<div class="t" style="top:609.67px;font-size:11.5px;color:#262626;left:795.00px;transform:scaleX(1.061);transform-origin:left center;">Rechnung</div>
<div class="t" style="top:609.67px;font-size:11.5px;color:#262626;left:912.53px;">15'161.03</div>
<div class="t" style="top:609.67px;font-size:11.5px;color:#262626;left:969.20px;transform:scaleX(0.981);transform-origin:left center;">CHF</div>
<div class="t" style="top:609.67px;font-size:11.5px;color:#262626;left:1132.40px;transform:scaleX(1.044);transform-origin:left center;">DHL</div>
<div class="t" style="top:609.67px;font-size:11.5px;color:#27279a;left:1252.41px;transform:scaleX(1.061);transform-origin:right center;text-decoration:underline;text-underline-offset:1.6px;text-decoration-thickness:1.1px;">341</div>
<div class="t" style="top:609.67px;font-size:11.5px;color:#27279a;left:1355.29px;text-decoration:underline;text-underline-offset:1.6px;text-decoration-thickness:1.1px;">0</div>
<div class="t" style="top:609.67px;font-size:11.5px;color:#262626;left:1464.39px;">0</div>
<div class="t" style="top:609.67px;font-size:11.5px;color:#262626;left:1563.79px;">0</div>
<div class="t" style="top:609.67px;font-size:11.5px;color:#262626;left:1576.60px;transform:scaleX(0.970);transform-origin:left center;">09.12.2025 10:...</div>
<div class="t" style="top:609.67px;font-size:11.5px;color:#262626;left:1667.60px;transform:scaleX(0.961);transform-origin:left center;">09.12.2025 10:...</div>
<div class="t" style="top:609.67px;font-size:11.5px;color:#262626;left:1790.59px;">0</div>
<div class="t" style="top:632.34px;font-size:11.5px;color:#262626;left:375.01px;transform:scaleX(1.044);transform-origin:right center;">354</div>
<div class="t" style="top:632.34px;font-size:11.5px;color:#262626;left:584.86px;transform:scaleX(0.972);transform-origin:right center;">10211</div>
<div class="t" style="top:632.34px;font-size:11.5px;color:#262626;left:623.00px;transform:scaleX(0.978);transform-origin:left center;">09.12.2025</div>
<div class="t" style="top:632.34px;font-size:11.5px;color:#262626;left:704.60px;transform:scaleX(1.059);transform-origin:left center;">Company fro...</div>
<div class="t" style="top:632.34px;font-size:11.5px;color:#262626;left:795.00px;transform:scaleX(1.061);transform-origin:left center;">Rechnung</div>
<div class="t" style="top:632.34px;font-size:11.5px;color:#262626;left:912.53px;">15'161.03</div>
<div class="t" style="top:632.34px;font-size:11.5px;color:#262626;left:969.20px;transform:scaleX(0.981);transform-origin:left center;">CHF</div>
<div class="t" style="top:632.34px;font-size:11.5px;color:#262626;left:1132.40px;transform:scaleX(1.044);transform-origin:left center;">DHL</div>
<div class="t" style="top:632.34px;font-size:11.5px;color:#27279a;left:1252.41px;transform:scaleX(1.061);transform-origin:right center;text-decoration:underline;text-underline-offset:1.6px;text-decoration-thickness:1.1px;">341</div>
<div class="t" style="top:632.34px;font-size:11.5px;color:#27279a;left:1355.29px;text-decoration:underline;text-underline-offset:1.6px;text-decoration-thickness:1.1px;">0</div>
<div class="t" style="top:632.34px;font-size:11.5px;color:#262626;left:1464.39px;">0</div>
<div class="t" style="top:632.34px;font-size:11.5px;color:#262626;left:1563.79px;">0</div>
<div class="t" style="top:632.34px;font-size:11.5px;color:#262626;left:1576.60px;transform:scaleX(0.970);transform-origin:left center;">09.12.2025 10:...</div>
<div class="t" style="top:632.34px;font-size:11.5px;color:#262626;left:1667.60px;transform:scaleX(0.961);transform-origin:left center;">09.12.2025 10:...</div>
<div class="t" style="top:632.34px;font-size:11.5px;color:#262626;left:1790.59px;">0</div>
<div class="b" style="left:352.00px;top:653.70px;width:1448.20px;height:22.67px;background:#f7f7f8;"></div>
<div class="t" style="top:655.00px;font-size:11.5px;color:#262626;left:375.01px;transform:scaleX(1.044);transform-origin:right center;">353</div>
<div class="t" style="top:655.00px;font-size:11.5px;color:#262626;left:584.02px;transform:scaleX(0.946);transform-origin:right center;">10210</div>
<div class="t" style="top:655.00px;font-size:11.5px;color:#262626;left:623.00px;transform:scaleX(0.978);transform-origin:left center;">09.12.2025</div>
<div class="t" style="top:655.00px;font-size:11.5px;color:#262626;left:704.60px;transform:scaleX(1.059);transform-origin:left center;">Company fro...</div>
<div class="t" style="top:655.00px;font-size:11.5px;color:#262626;left:795.00px;transform:scaleX(1.061);transform-origin:left center;">Rechnung</div>
<div class="t" style="top:655.00px;font-size:11.5px;color:#262626;left:912.53px;">15'161.03</div>
<div class="t" style="top:655.00px;font-size:11.5px;color:#262626;left:969.20px;transform:scaleX(0.981);transform-origin:left center;">CHF</div>
<div class="t" style="top:655.00px;font-size:11.5px;color:#262626;left:1132.40px;transform:scaleX(1.044);transform-origin:left center;">DHL</div>
<div class="t" style="top:655.00px;font-size:11.5px;color:#27279a;left:1252.41px;transform:scaleX(1.061);transform-origin:right center;text-decoration:underline;text-underline-offset:1.6px;text-decoration-thickness:1.1px;">341</div>
<div class="t" style="top:655.00px;font-size:11.5px;color:#27279a;left:1355.29px;text-decoration:underline;text-underline-offset:1.6px;text-decoration-thickness:1.1px;">0</div>
<div class="t" style="top:655.00px;font-size:11.5px;color:#262626;left:1464.39px;">0</div>
<div class="t" style="top:655.00px;font-size:11.5px;color:#262626;left:1563.79px;">0</div>
<div class="t" style="top:655.00px;font-size:11.5px;color:#262626;left:1576.60px;transform:scaleX(0.970);transform-origin:left center;">09.12.2025 10:...</div>
<div class="t" style="top:655.00px;font-size:11.5px;color:#262626;left:1667.60px;transform:scaleX(0.961);transform-origin:left center;">09.12.2025 10:...</div>
<div class="t" style="top:655.00px;font-size:11.5px;color:#262626;left:1790.59px;">0</div>
<div class="t" style="top:677.67px;font-size:11.5px;color:#262626;left:375.01px;transform:scaleX(1.044);transform-origin:right center;">352</div>
<div class="t" style="top:677.67px;font-size:11.5px;color:#262626;left:584.02px;transform:scaleX(0.946);transform-origin:right center;">10209</div>
<div class="t" style="top:677.67px;font-size:11.5px;color:#262626;left:623.00px;transform:scaleX(0.978);transform-origin:left center;">09.12.2025</div>
<div class="t" style="top:677.67px;font-size:11.5px;color:#262626;left:704.60px;transform:scaleX(1.059);transform-origin:left center;">Company fro...</div>
<div class="t" style="top:677.67px;font-size:11.5px;color:#262626;left:795.00px;transform:scaleX(1.061);transform-origin:left center;">Rechnung</div>
<div class="t" style="top:677.67px;font-size:11.5px;color:#262626;left:912.53px;">15'161.03</div>
<div class="t" style="top:677.67px;font-size:11.5px;color:#262626;left:969.20px;transform:scaleX(0.981);transform-origin:left center;">CHF</div>
<div class="t" style="top:677.67px;font-size:11.5px;color:#262626;left:1132.40px;transform:scaleX(1.044);transform-origin:left center;">DHL</div>
<div class="t" style="top:677.67px;font-size:11.5px;color:#27279a;left:1252.41px;transform:scaleX(1.061);transform-origin:right center;text-decoration:underline;text-underline-offset:1.6px;text-decoration-thickness:1.1px;">341</div>
<div class="t" style="top:677.67px;font-size:11.5px;color:#27279a;left:1355.29px;text-decoration:underline;text-underline-offset:1.6px;text-decoration-thickness:1.1px;">0</div>
<div class="t" style="top:677.67px;font-size:11.5px;color:#262626;left:1464.39px;">0</div>
<div class="t" style="top:677.67px;font-size:11.5px;color:#262626;left:1563.79px;">0</div>
<div class="t" style="top:677.67px;font-size:11.5px;color:#262626;left:1576.60px;transform:scaleX(0.970);transform-origin:left center;">09.12.2025 10:...</div>
<div class="t" style="top:677.67px;font-size:11.5px;color:#262626;left:1667.60px;transform:scaleX(0.961);transform-origin:left center;">09.12.2025 10:...</div>
<div class="t" style="top:677.67px;font-size:11.5px;color:#262626;left:1790.59px;">0</div>
<div class="b" style="left:352.00px;top:699.04px;width:1448.20px;height:22.67px;background:#f7f7f8;"></div>
<div class="t" style="top:700.34px;font-size:11.5px;color:#262626;left:375.01px;transform:scaleX(1.044);transform-origin:right center;">351</div>
<div class="t" style="top:700.34px;font-size:11.5px;color:#262626;left:584.02px;transform:scaleX(0.946);transform-origin:right center;">10208</div>
<div class="t" style="top:700.34px;font-size:11.5px;color:#262626;left:623.00px;transform:scaleX(0.978);transform-origin:left center;">09.12.2025</div>
<div class="t" style="top:700.34px;font-size:11.5px;color:#262626;left:704.60px;transform:scaleX(1.059);transform-origin:left center;">Company fro...</div>
<div class="t" style="top:700.34px;font-size:11.5px;color:#262626;left:795.00px;transform:scaleX(1.061);transform-origin:left center;">Rechnung</div>
<div class="t" style="top:700.34px;font-size:11.5px;color:#262626;left:912.53px;">15'161.03</div>
<div class="t" style="top:700.34px;font-size:11.5px;color:#262626;left:969.20px;transform:scaleX(0.981);transform-origin:left center;">CHF</div>
<div class="t" style="top:700.34px;font-size:11.5px;color:#262626;left:1132.40px;transform:scaleX(1.044);transform-origin:left center;">DHL</div>
<div class="t" style="top:700.34px;font-size:11.5px;color:#27279a;left:1252.41px;transform:scaleX(1.061);transform-origin:right center;text-decoration:underline;text-underline-offset:1.6px;text-decoration-thickness:1.1px;">341</div>
<div class="t" style="top:700.34px;font-size:11.5px;color:#27279a;left:1355.29px;text-decoration:underline;text-underline-offset:1.6px;text-decoration-thickness:1.1px;">0</div>
<div class="t" style="top:700.34px;font-size:11.5px;color:#262626;left:1464.39px;">0</div>
<div class="t" style="top:700.34px;font-size:11.5px;color:#262626;left:1563.79px;">0</div>
<div class="t" style="top:700.34px;font-size:11.5px;color:#262626;left:1576.60px;transform:scaleX(0.970);transform-origin:left center;">09.12.2025 09:...</div>
<div class="t" style="top:700.34px;font-size:11.5px;color:#262626;left:1667.60px;transform:scaleX(0.961);transform-origin:left center;">09.12.2025 09:...</div>
<div class="t" style="top:700.34px;font-size:11.5px;color:#262626;left:1790.59px;">0</div>
<div class="t" style="top:723.01px;font-size:11.5px;color:#262626;left:375.01px;transform:scaleX(1.044);transform-origin:right center;">350</div>
<div class="t" style="top:723.01px;font-size:11.5px;color:#262626;left:584.02px;transform:scaleX(0.946);transform-origin:right center;">10207</div>
<div class="t" style="top:723.01px;font-size:11.5px;color:#262626;left:623.00px;transform:scaleX(0.978);transform-origin:left center;">09.12.2025</div>
<div class="t" style="top:723.01px;font-size:11.5px;color:#262626;left:704.60px;transform:scaleX(1.059);transform-origin:left center;">Company fro...</div>
<div class="t" style="top:723.01px;font-size:11.5px;color:#262626;left:795.00px;transform:scaleX(1.061);transform-origin:left center;">Rechnung</div>
<div class="t" style="top:723.01px;font-size:11.5px;color:#262626;left:912.53px;">15'161.03</div>
<div class="t" style="top:723.01px;font-size:11.5px;color:#262626;left:969.20px;transform:scaleX(0.981);transform-origin:left center;">CHF</div>
<div class="t" style="top:723.01px;font-size:11.5px;color:#262626;left:1132.40px;transform:scaleX(1.044);transform-origin:left center;">DHL</div>
<div class="t" style="top:723.01px;font-size:11.5px;color:#27279a;left:1252.41px;transform:scaleX(1.061);transform-origin:right center;text-decoration:underline;text-underline-offset:1.6px;text-decoration-thickness:1.1px;">341</div>
<div class="t" style="top:723.01px;font-size:11.5px;color:#27279a;left:1355.29px;text-decoration:underline;text-underline-offset:1.6px;text-decoration-thickness:1.1px;">0</div>
<div class="t" style="top:723.01px;font-size:11.5px;color:#262626;left:1464.39px;">0</div>
<div class="t" style="top:723.01px;font-size:11.5px;color:#262626;left:1563.79px;">0</div>
<div class="t" style="top:723.01px;font-size:11.5px;color:#262626;left:1576.60px;transform:scaleX(0.970);transform-origin:left center;">09.12.2025 09:...</div>
<div class="t" style="top:723.01px;font-size:11.5px;color:#262626;left:1667.60px;transform:scaleX(0.961);transform-origin:left center;">09.12.2025 09:...</div>
<div class="t" style="top:723.01px;font-size:11.5px;color:#262626;left:1790.59px;">0</div>
<div class="b" style="left:352.00px;top:744.37px;width:1448.20px;height:22.67px;background:#f7f7f8;"></div>
<div class="t" style="top:745.67px;font-size:11.5px;color:#262626;left:375.01px;transform:scaleX(1.044);transform-origin:right center;">349</div>
<div class="t" style="top:745.67px;font-size:11.5px;color:#262626;left:584.02px;transform:scaleX(0.946);transform-origin:right center;">10206</div>
<div class="t" style="top:745.67px;font-size:11.5px;color:#262626;left:623.00px;transform:scaleX(0.978);transform-origin:left center;">09.12.2025</div>
<div class="t" style="top:745.67px;font-size:11.5px;color:#262626;left:704.60px;transform:scaleX(1.059);transform-origin:left center;">Company fro...</div>
<div class="t" style="top:745.67px;font-size:11.5px;color:#262626;left:795.00px;transform:scaleX(1.061);transform-origin:left center;">Rechnung</div>
<div class="t" style="top:745.67px;font-size:11.5px;color:#262626;left:912.53px;">15'161.03</div>
<div class="t" style="top:745.67px;font-size:11.5px;color:#262626;left:969.20px;transform:scaleX(0.981);transform-origin:left center;">CHF</div>
<div class="t" style="top:745.67px;font-size:11.5px;color:#262626;left:1132.40px;transform:scaleX(1.044);transform-origin:left center;">DHL</div>
<div class="t" style="top:745.67px;font-size:11.5px;color:#27279a;left:1252.41px;transform:scaleX(1.061);transform-origin:right center;text-decoration:underline;text-underline-offset:1.6px;text-decoration-thickness:1.1px;">341</div>
<div class="t" style="top:745.67px;font-size:11.5px;color:#27279a;left:1355.29px;text-decoration:underline;text-underline-offset:1.6px;text-decoration-thickness:1.1px;">0</div>
<div class="t" style="top:745.67px;font-size:11.5px;color:#262626;left:1464.39px;">0</div>
<div class="t" style="top:745.67px;font-size:11.5px;color:#262626;left:1563.79px;">0</div>
<div class="t" style="top:745.67px;font-size:11.5px;color:#262626;left:1576.60px;transform:scaleX(0.970);transform-origin:left center;">09.12.2025 09:...</div>
<div class="t" style="top:745.67px;font-size:11.5px;color:#262626;left:1667.60px;transform:scaleX(0.961);transform-origin:left center;">09.12.2025 09:...</div>
<div class="t" style="top:745.67px;font-size:11.5px;color:#262626;left:1790.59px;">0</div>
<div class="t" style="top:768.34px;font-size:11.5px;color:#262626;left:375.01px;transform:scaleX(1.044);transform-origin:right center;">348</div>
<div class="t" style="top:768.34px;font-size:11.5px;color:#262626;left:584.02px;transform:scaleX(0.946);transform-origin:right center;">10205</div>
<div class="t" style="top:768.34px;font-size:11.5px;color:#262626;left:623.00px;transform:scaleX(0.978);transform-origin:left center;">09.12.2025</div>
<div class="t" style="top:768.34px;font-size:11.5px;color:#262626;left:704.60px;transform:scaleX(1.059);transform-origin:left center;">Company fro...</div>
<div class="t" style="top:768.34px;font-size:11.5px;color:#262626;left:795.00px;transform:scaleX(1.061);transform-origin:left center;">Rechnung</div>
<div class="t" style="top:768.34px;font-size:11.5px;color:#262626;left:912.53px;">15'161.03</div>
<div class="t" style="top:768.34px;font-size:11.5px;color:#262626;left:969.20px;transform:scaleX(0.981);transform-origin:left center;">CHF</div>
<div class="t" style="top:768.34px;font-size:11.5px;color:#262626;left:1132.40px;transform:scaleX(1.044);transform-origin:left center;">DHL</div>
<div class="t" style="top:768.34px;font-size:11.5px;color:#27279a;left:1252.41px;transform:scaleX(1.061);transform-origin:right center;text-decoration:underline;text-underline-offset:1.6px;text-decoration-thickness:1.1px;">341</div>
<div class="t" style="top:768.34px;font-size:11.5px;color:#27279a;left:1355.29px;text-decoration:underline;text-underline-offset:1.6px;text-decoration-thickness:1.1px;">0</div>
<div class="t" style="top:768.34px;font-size:11.5px;color:#262626;left:1464.39px;">0</div>
<div class="t" style="top:768.34px;font-size:11.5px;color:#262626;left:1563.79px;">0</div>
<div class="t" style="top:768.34px;font-size:11.5px;color:#262626;left:1576.60px;transform:scaleX(0.970);transform-origin:left center;">09.12.2025 09:...</div>
<div class="t" style="top:768.34px;font-size:11.5px;color:#262626;left:1667.60px;transform:scaleX(0.961);transform-origin:left center;">09.12.2025 09:...</div>
<div class="t" style="top:768.34px;font-size:11.5px;color:#262626;left:1790.59px;">0</div>
<div class="b" style="left:352.00px;top:789.71px;width:1448.20px;height:22.67px;background:#f7f7f8;"></div>
<div class="t" style="top:791.01px;font-size:11.5px;color:#262626;left:375.01px;transform:scaleX(1.044);transform-origin:right center;">347</div>
<div class="t" style="top:791.01px;font-size:11.5px;color:#262626;left:584.02px;transform:scaleX(0.946);transform-origin:right center;">10204</div>
<div class="t" style="top:791.01px;font-size:11.5px;color:#262626;left:623.00px;transform:scaleX(0.978);transform-origin:left center;">09.12.2025</div>
<div class="t" style="top:791.01px;font-size:11.5px;color:#262626;left:704.60px;transform:scaleX(1.059);transform-origin:left center;">Company fro...</div>
<div class="t" style="top:791.01px;font-size:11.5px;color:#262626;left:795.00px;transform:scaleX(1.061);transform-origin:left center;">Rechnung</div>
<div class="t" style="top:791.01px;font-size:11.5px;color:#262626;left:912.53px;">15'161.03</div>
<div class="t" style="top:791.01px;font-size:11.5px;color:#262626;left:969.20px;transform:scaleX(0.981);transform-origin:left center;">CHF</div>
<div class="t" style="top:791.01px;font-size:11.5px;color:#262626;left:1132.40px;transform:scaleX(1.044);transform-origin:left center;">DHL</div>
<div class="t" style="top:791.01px;font-size:11.5px;color:#27279a;left:1252.41px;transform:scaleX(1.061);transform-origin:right center;text-decoration:underline;text-underline-offset:1.6px;text-decoration-thickness:1.1px;">341</div>
<div class="t" style="top:791.01px;font-size:11.5px;color:#27279a;left:1355.29px;text-decoration:underline;text-underline-offset:1.6px;text-decoration-thickness:1.1px;">0</div>
<div class="t" style="top:791.01px;font-size:11.5px;color:#262626;left:1464.39px;">0</div>
<div class="t" style="top:791.01px;font-size:11.5px;color:#262626;left:1563.79px;">0</div>
<div class="t" style="top:791.01px;font-size:11.5px;color:#262626;left:1576.60px;transform:scaleX(0.970);transform-origin:left center;">09.12.2025 09:...</div>
<div class="t" style="top:791.01px;font-size:11.5px;color:#262626;left:1667.60px;transform:scaleX(0.961);transform-origin:left center;">09.12.2025 09:...</div>
<div class="t" style="top:791.01px;font-size:11.5px;color:#262626;left:1790.59px;">0</div>
<div class="t" style="top:813.67px;font-size:11.5px;color:#262626;left:375.01px;transform:scaleX(1.044);transform-origin:right center;">346</div>
<div class="t" style="top:813.67px;font-size:11.5px;color:#262626;left:584.02px;transform:scaleX(0.946);transform-origin:right center;">10203</div>
<div class="t" style="top:813.67px;font-size:11.5px;color:#262626;left:623.00px;transform:scaleX(0.978);transform-origin:left center;">09.12.2025</div>
<div class="t" style="top:813.67px;font-size:11.5px;color:#262626;left:704.60px;transform:scaleX(1.059);transform-origin:left center;">Company fro...</div>
<div class="t" style="top:813.67px;font-size:11.5px;color:#262626;left:795.00px;transform:scaleX(1.061);transform-origin:left center;">Rechnung</div>
<div class="t" style="top:813.67px;font-size:11.5px;color:#262626;left:912.53px;">15'161.03</div>
<div class="t" style="top:813.67px;font-size:11.5px;color:#262626;left:969.20px;transform:scaleX(0.981);transform-origin:left center;">CHF</div>
<div class="t" style="top:813.67px;font-size:11.5px;color:#262626;left:1132.40px;transform:scaleX(1.044);transform-origin:left center;">DHL</div>
<div class="t" style="top:813.67px;font-size:11.5px;color:#27279a;left:1252.41px;transform:scaleX(1.061);transform-origin:right center;text-decoration:underline;text-underline-offset:1.6px;text-decoration-thickness:1.1px;">341</div>
<div class="t" style="top:813.67px;font-size:11.5px;color:#27279a;left:1355.29px;text-decoration:underline;text-underline-offset:1.6px;text-decoration-thickness:1.1px;">0</div>
<div class="t" style="top:813.67px;font-size:11.5px;color:#262626;left:1464.39px;">0</div>
<div class="t" style="top:813.67px;font-size:11.5px;color:#262626;left:1563.79px;">0</div>
<div class="t" style="top:813.67px;font-size:11.5px;color:#262626;left:1576.60px;transform:scaleX(0.970);transform-origin:left center;">09.12.2025 09:...</div>
<div class="t" style="top:813.67px;font-size:11.5px;color:#262626;left:1667.60px;transform:scaleX(0.961);transform-origin:left center;">09.12.2025 09:...</div>
<div class="t" style="top:813.67px;font-size:11.5px;color:#262626;left:1790.59px;">0</div>
<div class="b" style="left:352.00px;top:835.04px;width:1448.20px;height:22.67px;background:#f7f7f8;"></div>
<div class="t" style="top:836.34px;font-size:11.5px;color:#262626;left:375.01px;transform:scaleX(1.044);transform-origin:right center;">345</div>
<div class="t" style="top:836.34px;font-size:11.5px;color:#262626;left:584.02px;transform:scaleX(0.946);transform-origin:right center;">10202</div>
<div class="t" style="top:836.34px;font-size:11.5px;color:#262626;left:623.00px;transform:scaleX(0.978);transform-origin:left center;">09.12.2025</div>
<div class="t" style="top:836.34px;font-size:11.5px;color:#262626;left:704.60px;transform:scaleX(1.059);transform-origin:left center;">Company fro...</div>
<div class="t" style="top:836.34px;font-size:11.5px;color:#262626;left:795.00px;transform:scaleX(1.061);transform-origin:left center;">Rechnung</div>
<div class="t" style="top:836.34px;font-size:11.5px;color:#262626;left:912.53px;">15'161.03</div>
<div class="t" style="top:836.34px;font-size:11.5px;color:#262626;left:969.20px;transform:scaleX(0.981);transform-origin:left center;">CHF</div>
<div class="t" style="top:836.34px;font-size:11.5px;color:#262626;left:1132.40px;transform:scaleX(1.044);transform-origin:left center;">DHL</div>
<div class="t" style="top:836.34px;font-size:11.5px;color:#27279a;left:1252.41px;transform:scaleX(1.061);transform-origin:right center;text-decoration:underline;text-underline-offset:1.6px;text-decoration-thickness:1.1px;">341</div>
<div class="t" style="top:836.34px;font-size:11.5px;color:#27279a;left:1355.29px;text-decoration:underline;text-underline-offset:1.6px;text-decoration-thickness:1.1px;">0</div>
<div class="t" style="top:836.34px;font-size:11.5px;color:#262626;left:1464.39px;">0</div>
<div class="t" style="top:836.34px;font-size:11.5px;color:#262626;left:1563.79px;">0</div>
<div class="t" style="top:836.34px;font-size:11.5px;color:#262626;left:1576.60px;transform:scaleX(0.970);transform-origin:left center;">09.12.2025 09:...</div>
<div class="t" style="top:836.34px;font-size:11.5px;color:#262626;left:1667.60px;transform:scaleX(0.961);transform-origin:left center;">09.12.2025 09:...</div>
<div class="t" style="top:836.34px;font-size:11.5px;color:#262626;left:1790.59px;">0</div>
<div class="t" style="top:859.01px;font-size:11.5px;color:#262626;left:375.01px;transform:scaleX(1.044);transform-origin:right center;">344</div>
<div class="t" style="top:859.01px;font-size:11.5px;color:#262626;left:584.02px;transform:scaleX(0.946);transform-origin:right center;">10201</div>
<div class="t" style="top:859.01px;font-size:11.5px;color:#262626;left:623.00px;transform:scaleX(0.978);transform-origin:left center;">09.12.2025</div>
<div class="t" style="top:859.01px;font-size:11.5px;color:#262626;left:704.60px;transform:scaleX(1.059);transform-origin:left center;">Company fro...</div>
<div class="t" style="top:859.01px;font-size:11.5px;color:#262626;left:795.00px;transform:scaleX(1.061);transform-origin:left center;">Rechnung</div>
<div class="t" style="top:859.01px;font-size:11.5px;color:#262626;left:912.53px;">15'161.03</div>
<div class="t" style="top:859.01px;font-size:11.5px;color:#262626;left:969.20px;transform:scaleX(0.981);transform-origin:left center;">CHF</div>
<div class="t" style="top:859.01px;font-size:11.5px;color:#262626;left:1132.40px;transform:scaleX(1.044);transform-origin:left center;">DHL</div>
<div class="t" style="top:859.01px;font-size:11.5px;color:#27279a;left:1252.41px;transform:scaleX(1.061);transform-origin:right center;text-decoration:underline;text-underline-offset:1.6px;text-decoration-thickness:1.1px;">341</div>
<div class="t" style="top:859.01px;font-size:11.5px;color:#27279a;left:1355.29px;text-decoration:underline;text-underline-offset:1.6px;text-decoration-thickness:1.1px;">0</div>
<div class="t" style="top:859.01px;font-size:11.5px;color:#262626;left:1464.39px;">0</div>
<div class="t" style="top:859.01px;font-size:11.5px;color:#262626;left:1563.79px;">0</div>
<div class="t" style="top:859.01px;font-size:11.5px;color:#262626;left:1576.60px;transform:scaleX(0.970);transform-origin:left center;">09.12.2025 09:...</div>
<div class="t" style="top:859.01px;font-size:11.5px;color:#262626;left:1667.60px;transform:scaleX(0.961);transform-origin:left center;">09.12.2025 09:...</div>
<div class="t" style="top:859.01px;font-size:11.5px;color:#262626;left:1790.59px;">0</div>
<div class="b" style="left:352.00px;top:880.38px;width:1448.20px;height:22.67px;background:#f7f7f8;"></div>
<div class="t" style="top:881.67px;font-size:11.5px;color:#262626;left:375.01px;transform:scaleX(1.044);transform-origin:right center;">343</div>
<div class="t" style="top:881.67px;font-size:11.5px;color:#262626;left:584.02px;transform:scaleX(0.946);transform-origin:right center;">10196</div>
<div class="t" style="top:881.67px;font-size:11.5px;color:#262626;left:623.00px;transform:scaleX(0.978);transform-origin:left center;">08.12.2025</div>
<div class="t" style="top:881.67px;font-size:11.5px;color:#262626;left:704.60px;transform:scaleX(1.040);transform-origin:left center;">LockeContact...</div>
<div class="t" style="top:881.67px;font-size:11.5px;color:#262626;left:795.00px;transform:scaleX(1.061);transform-origin:left center;">Rechnung</div>
<div class="t" style="top:881.67px;font-size:11.5px;color:#262626;left:912.53px;">15'161.03</div>
<div class="t" style="top:881.67px;font-size:11.5px;color:#262626;left:969.20px;transform:scaleX(0.981);transform-origin:left center;">CHF</div>
<div class="t" style="top:881.67px;font-size:11.5px;color:#262626;left:1132.40px;transform:scaleX(1.044);transform-origin:left center;">DHL</div>
<div class="t" style="top:881.67px;font-size:11.5px;color:#27279a;left:1252.41px;transform:scaleX(1.061);transform-origin:right center;text-decoration:underline;text-underline-offset:1.6px;text-decoration-thickness:1.1px;">328</div>
<div class="t" style="top:881.67px;font-size:11.5px;color:#27279a;left:1355.29px;text-decoration:underline;text-underline-offset:1.6px;text-decoration-thickness:1.1px;">0</div>
<div class="t" style="top:881.67px;font-size:11.5px;color:#262626;left:1464.39px;">0</div>
<div class="t" style="top:881.67px;font-size:11.5px;color:#262626;left:1563.79px;">0</div>
<div class="t" style="top:881.67px;font-size:11.5px;color:#262626;left:1576.60px;transform:scaleX(0.970);transform-origin:left center;">09.12.2025 09:...</div>
<div class="t" style="top:881.67px;font-size:11.5px;color:#262626;left:1667.60px;transform:scaleX(0.961);transform-origin:left center;">09.12.2025 09:...</div>
<div class="t" style="top:881.67px;font-size:11.5px;color:#262626;left:1790.59px;">0</div>
<div class="t" style="top:904.34px;font-size:11.5px;color:#262626;left:375.01px;transform:scaleX(1.044);transform-origin:right center;">341</div>
<div class="t" style="top:904.34px;font-size:11.5px;color:#262626;left:584.02px;transform:scaleX(0.946);transform-origin:right center;">10220</div>
<div class="t" style="top:904.34px;font-size:11.5px;color:#262626;left:623.00px;transform:scaleX(0.978);transform-origin:left center;">08.12.2025</div>
<div class="t" style="top:904.34px;font-size:11.5px;color:#262626;left:704.60px;transform:scaleX(1.014);transform-origin:left center;">Locke08.12</div>
<div class="t" style="top:904.34px;font-size:11.5px;color:#262626;left:795.00px;transform:scaleX(1.080);transform-origin:left center;">Invoice</div>
<div class="t" style="top:904.34px;font-size:11.5px;color:#262626;left:933.92px;">54.83</div>
<div class="t" style="top:904.34px;font-size:11.5px;color:#262626;left:969.20px;transform:scaleX(0.981);transform-origin:left center;">CHF</div>
<div class="t" style="top:904.34px;font-size:11.5px;color:#262626;left:1132.40px;transform:scaleX(1.057);transform-origin:left center;">Standard</div>
<div class="t" style="top:904.34px;font-size:11.5px;color:#27279a;left:1252.41px;transform:scaleX(1.061);transform-origin:right center;text-decoration:underline;text-underline-offset:1.6px;text-decoration-thickness:1.1px;">328</div>
<div class="t" style="top:904.34px;font-size:11.5px;color:#27279a;left:1355.29px;text-decoration:underline;text-underline-offset:1.6px;text-decoration-thickness:1.1px;">0</div>
<div class="t" style="top:904.34px;font-size:11.5px;color:#262626;left:1464.39px;">0</div>
<div class="t" style="top:904.34px;font-size:11.5px;color:#262626;left:1563.79px;">0</div>
<div class="t" style="top:904.34px;font-size:11.5px;color:#262626;left:1576.60px;transform:scaleX(0.970);transform-origin:left center;">08.12.2025 20:...</div>
<div class="t" style="top:904.34px;font-size:11.5px;color:#262626;left:1667.60px;transform:scaleX(0.961);transform-origin:left center;">08.12.2025 20:...</div>
<div class="t" style="top:904.34px;font-size:11.5px;color:#262626;left:1790.59px;">0</div>
<div class="b" style="left:352.00px;top:925.71px;width:1448.20px;height:22.67px;background:#f7f7f8;"></div>
<div class="t" style="top:927.01px;font-size:11.5px;color:#262626;left:375.01px;transform:scaleX(1.044);transform-origin:right center;">339</div>
<div class="t" style="top:927.01px;font-size:11.5px;color:#262626;left:584.02px;transform:scaleX(0.946);transform-origin:right center;">10219</div>
<div class="t" style="top:927.01px;font-size:11.5px;color:#262626;left:623.00px;transform:scaleX(0.978);transform-origin:left center;">08.12.2025</div>
<div class="t" style="top:927.01px;font-size:11.5px;color:#262626;left:704.60px;transform:scaleX(1.014);transform-origin:left center;">Locke08.12</div>
<div class="t" style="top:927.01px;font-size:11.5px;color:#262626;left:795.00px;transform:scaleX(1.080);transform-origin:left center;">Invoice</div>
<div class="t" style="top:927.01px;font-size:11.5px;color:#262626;left:933.92px;">54.83</div>
<div class="t" style="top:927.01px;font-size:11.5px;color:#262626;left:969.20px;transform:scaleX(0.981);transform-origin:left center;">CHF</div>
<div class="t" style="top:927.01px;font-size:11.5px;color:#262626;left:1132.40px;transform:scaleX(1.057);transform-origin:left center;">Standard</div>
<div class="t" style="top:927.01px;font-size:11.5px;color:#27279a;left:1252.41px;transform:scaleX(1.061);transform-origin:right center;text-decoration:underline;text-underline-offset:1.6px;text-decoration-thickness:1.1px;">328</div>
<div class="t" style="top:927.01px;font-size:11.5px;color:#27279a;left:1355.29px;text-decoration:underline;text-underline-offset:1.6px;text-decoration-thickness:1.1px;">0</div>
<div class="t" style="top:927.01px;font-size:11.5px;color:#262626;left:1464.39px;">0</div>
<div class="t" style="top:927.01px;font-size:11.5px;color:#262626;left:1563.79px;">0</div>
<div class="t" style="top:927.01px;font-size:11.5px;color:#262626;left:1576.60px;transform:scaleX(0.970);transform-origin:left center;">08.12.2025 20:...</div>
<div class="t" style="top:927.01px;font-size:11.5px;color:#262626;left:1667.60px;transform:scaleX(0.961);transform-origin:left center;">08.12.2025 20:...</div>
<div class="t" style="top:927.01px;font-size:11.5px;color:#262626;left:1790.59px;">0</div>
<div class="t" style="top:949.68px;font-size:11.5px;color:#262626;left:375.01px;transform:scaleX(1.044);transform-origin:right center;">338</div>
<div class="t" style="top:949.68px;font-size:11.5px;color:#262626;left:584.02px;transform:scaleX(0.946);transform-origin:right center;">10218</div>
<div class="t" style="top:949.68px;font-size:11.5px;color:#262626;left:623.00px;transform:scaleX(0.978);transform-origin:left center;">08.12.2025</div>
<div class="t" style="top:949.68px;font-size:11.5px;color:#262626;left:704.60px;transform:scaleX(1.014);transform-origin:left center;">Locke08.12</div>
<div class="t" style="top:949.68px;font-size:11.5px;color:#262626;left:795.00px;transform:scaleX(1.080);transform-origin:left center;">Invoice</div>
<div class="t" style="top:949.68px;font-size:11.5px;color:#262626;left:933.92px;">54.83</div>
<div class="t" style="top:949.68px;font-size:11.5px;color:#262626;left:969.20px;transform:scaleX(0.981);transform-origin:left center;">CHF</div>
<div class="t" style="top:949.68px;font-size:11.5px;color:#262626;left:1132.40px;transform:scaleX(1.057);transform-origin:left center;">Standard</div>
<div class="t" style="top:949.68px;font-size:11.5px;color:#27279a;left:1252.41px;transform:scaleX(1.061);transform-origin:right center;text-decoration:underline;text-underline-offset:1.6px;text-decoration-thickness:1.1px;">336</div>
<div class="t" style="top:949.68px;font-size:11.5px;color:#27279a;left:1355.29px;text-decoration:underline;text-underline-offset:1.6px;text-decoration-thickness:1.1px;">0</div>
<div class="t" style="top:949.68px;font-size:11.5px;color:#262626;left:1464.39px;">0</div>
<div class="t" style="top:949.68px;font-size:11.5px;color:#262626;left:1563.79px;">0</div>
<div class="t" style="top:949.68px;font-size:11.5px;color:#262626;left:1576.60px;transform:scaleX(0.970);transform-origin:left center;">08.12.2025 20:...</div>
<div class="t" style="top:949.68px;font-size:11.5px;color:#262626;left:1667.60px;transform:scaleX(0.961);transform-origin:left center;">08.12.2025 20:...</div>
<div class="t" style="top:949.68px;font-size:11.5px;color:#262626;left:1790.59px;">0</div>
<div class="b" style="left:352.00px;top:971.04px;width:1448.20px;height:22.67px;background:#f7f7f8;"></div>
<div class="t" style="top:972.34px;font-size:11.5px;color:#262626;left:375.01px;transform:scaleX(1.044);transform-origin:right center;">337</div>
<div class="t" style="top:972.34px;font-size:11.5px;color:#262626;left:584.02px;transform:scaleX(0.946);transform-origin:right center;">10217</div>
<div class="t" style="top:972.34px;font-size:11.5px;color:#262626;left:623.00px;transform:scaleX(0.978);transform-origin:left center;">08.12.2025</div>
<div class="t" style="top:972.34px;font-size:11.5px;color:#262626;left:704.60px;transform:scaleX(1.014);transform-origin:left center;">Locke08.12</div>
<div class="t" style="top:972.34px;font-size:11.5px;color:#262626;left:795.00px;transform:scaleX(1.080);transform-origin:left center;">Invoice</div>
<div class="t" style="top:972.34px;font-size:11.5px;color:#262626;left:933.92px;">54.83</div>
<div class="t" style="top:972.34px;font-size:11.5px;color:#262626;left:969.20px;transform:scaleX(0.981);transform-origin:left center;">CHF</div>
<div class="t" style="top:972.34px;font-size:11.5px;color:#262626;left:1132.40px;transform:scaleX(1.057);transform-origin:left center;">Standard</div>
<div class="t" style="top:972.34px;font-size:11.5px;color:#27279a;left:1252.41px;transform:scaleX(1.061);transform-origin:right center;text-decoration:underline;text-underline-offset:1.6px;text-decoration-thickness:1.1px;">336</div>
<div class="t" style="top:972.34px;font-size:11.5px;color:#27279a;left:1355.29px;text-decoration:underline;text-underline-offset:1.6px;text-decoration-thickness:1.1px;">0</div>
<div class="t" style="top:972.34px;font-size:11.5px;color:#262626;left:1464.39px;">0</div>
<div class="t" style="top:972.34px;font-size:11.5px;color:#262626;left:1563.79px;">0</div>
<div class="t" style="top:972.34px;font-size:11.5px;color:#262626;left:1576.60px;transform:scaleX(0.970);transform-origin:left center;">08.12.2025 20:...</div>
<div class="t" style="top:972.34px;font-size:11.5px;color:#262626;left:1667.60px;transform:scaleX(0.961);transform-origin:left center;">08.12.2025 20:...</div>
<div class="t" style="top:972.34px;font-size:11.5px;color:#262626;left:1790.59px;">0</div>
<div class="t" style="top:995.01px;font-size:11.5px;color:#262626;left:375.01px;transform:scaleX(1.044);transform-origin:right center;">336</div>
<div class="t" style="top:995.01px;font-size:11.5px;color:#262626;left:584.02px;transform:scaleX(0.946);transform-origin:right center;">10216</div>
<div class="t" style="top:995.01px;font-size:11.5px;color:#262626;left:623.00px;transform:scaleX(0.978);transform-origin:left center;">08.12.2025</div>
<div class="t" style="top:995.01px;font-size:11.5px;color:#262626;left:704.60px;transform:scaleX(1.014);transform-origin:left center;">Locke08.12</div>
<div class="t" style="top:995.01px;font-size:11.5px;color:#262626;left:795.00px;transform:scaleX(1.080);transform-origin:left center;">Invoice</div>
<div class="t" style="top:995.01px;font-size:11.5px;color:#262626;left:933.92px;">54.83</div>
<div class="t" style="top:995.01px;font-size:11.5px;color:#262626;left:969.20px;transform:scaleX(0.981);transform-origin:left center;">CHF</div>
<div class="t" style="top:995.01px;font-size:11.5px;color:#262626;left:1132.40px;transform:scaleX(1.057);transform-origin:left center;">Standard</div>
<div class="t" style="top:995.01px;font-size:11.5px;color:#27279a;left:1252.41px;transform:scaleX(1.061);transform-origin:right center;text-decoration:underline;text-underline-offset:1.6px;text-decoration-thickness:1.1px;">336</div>
<div class="t" style="top:995.01px;font-size:11.5px;color:#27279a;left:1355.29px;text-decoration:underline;text-underline-offset:1.6px;text-decoration-thickness:1.1px;">0</div>
<div class="t" style="top:995.01px;font-size:11.5px;color:#262626;left:1464.39px;">0</div>
<div class="t" style="top:995.01px;font-size:11.5px;color:#262626;left:1563.79px;">0</div>
<div class="t" style="top:995.01px;font-size:11.5px;color:#262626;left:1576.60px;transform:scaleX(0.970);transform-origin:left center;">08.12.2025 20:...</div>
<div class="t" style="top:995.01px;font-size:11.5px;color:#262626;left:1667.60px;transform:scaleX(0.961);transform-origin:left center;">08.12.2025 20:...</div>
<div class="t" style="top:995.01px;font-size:11.5px;color:#262626;left:1790.59px;">0</div>
<div class="b" style="left:352.00px;top:1016.38px;width:1448.20px;height:22.67px;background:#f7f7f8;"></div>
<div class="t" style="top:1017.68px;font-size:11.5px;color:#262626;left:375.01px;transform:scaleX(1.044);transform-origin:right center;">334</div>
<div class="t" style="top:1017.68px;font-size:11.5px;color:#262626;left:584.02px;transform:scaleX(0.946);transform-origin:right center;">10215</div>
<div class="t" style="top:1017.68px;font-size:11.5px;color:#262626;left:623.00px;transform:scaleX(0.978);transform-origin:left center;">08.12.2025</div>
<div class="t" style="top:1017.68px;font-size:11.5px;color:#262626;left:704.60px;transform:scaleX(1.092);transform-origin:left center;">MartinTest08...</div>
<div class="t" style="top:1017.68px;font-size:11.5px;color:#262626;left:795.00px;transform:scaleX(1.080);transform-origin:left center;">Invoice</div>
<div class="t" style="top:1017.68px;font-size:11.5px;color:#262626;left:933.92px;">54.83</div>
<div class="t" style="top:1017.68px;font-size:11.5px;color:#262626;left:969.20px;transform:scaleX(0.981);transform-origin:left center;">CHF</div>
<div class="t" style="top:1017.68px;font-size:11.5px;color:#262626;left:1132.40px;transform:scaleX(1.057);transform-origin:left center;">Standard</div>
<div class="t" style="top:1017.68px;font-size:11.5px;color:#27279a;left:1252.41px;transform:scaleX(1.061);transform-origin:right center;text-decoration:underline;text-underline-offset:1.6px;text-decoration-thickness:1.1px;">328</div>
<div class="t" style="top:1017.68px;font-size:11.5px;color:#27279a;left:1355.29px;text-decoration:underline;text-underline-offset:1.6px;text-decoration-thickness:1.1px;">0</div>
<div class="t" style="top:1017.68px;font-size:11.5px;color:#262626;left:1464.39px;">0</div>
<div class="t" style="top:1017.68px;font-size:11.5px;color:#262626;left:1563.79px;">0</div>
<div class="t" style="top:1017.68px;font-size:11.5px;color:#262626;left:1576.60px;transform:scaleX(0.970);transform-origin:left center;">08.12.2025 19:...</div>
<div class="t" style="top:1017.68px;font-size:11.5px;color:#262626;left:1667.60px;transform:scaleX(0.961);transform-origin:left center;">08.12.2025 19:...</div>
<div class="t" style="top:1017.68px;font-size:11.5px;color:#262626;left:1790.59px;">0</div>
<div class="t" style="top:1040.34px;font-size:11.5px;color:#262626;left:375.01px;transform:scaleX(1.044);transform-origin:right center;">331</div>
<div class="t" style="top:1040.34px;font-size:11.5px;color:#262626;left:584.02px;transform:scaleX(0.946);transform-origin:right center;">10200</div>
<div class="t" style="top:1040.34px;font-size:11.5px;color:#262626;left:623.00px;transform:scaleX(0.978);transform-origin:left center;">08.12.2025</div>
<div class="t" style="top:1040.34px;font-size:11.5px;color:#262626;left:704.60px;transform:scaleX(1.014);transform-origin:left center;">Locke08.12</div>
<div class="t" style="top:1040.34px;font-size:11.5px;color:#262626;left:795.00px;transform:scaleX(1.061);transform-origin:left center;">Rechnung</div>
<div class="t" style="top:1040.34px;font-size:11.5px;color:#262626;left:912.53px;">15'161.03</div>
<div class="t" style="top:1040.34px;font-size:11.5px;color:#262626;left:969.20px;transform:scaleX(0.981);transform-origin:left center;">CHF</div>
<div class="t" style="top:1040.34px;font-size:11.5px;color:#262626;left:1132.40px;transform:scaleX(1.044);transform-origin:left center;">DHL</div>
<div class="t" style="top:1040.34px;font-size:11.5px;color:#27279a;left:1252.41px;transform:scaleX(1.061);transform-origin:right center;text-decoration:underline;text-underline-offset:1.6px;text-decoration-thickness:1.1px;">328</div>
<div class="t" style="top:1040.34px;font-size:11.5px;color:#27279a;left:1355.29px;text-decoration:underline;text-underline-offset:1.6px;text-decoration-thickness:1.1px;">0</div>
<div class="t" style="top:1040.34px;font-size:11.5px;color:#262626;left:1464.39px;">0</div>
<div class="t" style="top:1040.34px;font-size:11.5px;color:#262626;left:1563.79px;">0</div>
<div class="t" style="top:1040.34px;font-size:11.5px;color:#262626;left:1576.60px;transform:scaleX(0.970);transform-origin:left center;">08.12.2025 17:...</div>
<div class="t" style="top:1040.34px;font-size:11.5px;color:#262626;left:1667.60px;transform:scaleX(0.961);transform-origin:left center;">08.12.2025 17:...</div>
<div class="t" style="top:1040.34px;font-size:11.5px;color:#262626;left:1790.59px;">0</div>
<div class="b" style="left:352.00px;top:1061.71px;width:1448.20px;height:22.67px;background:#f7f7f8;"></div>
<div class="t" style="top:1063.01px;font-size:11.5px;color:#262626;left:375.01px;transform:scaleX(1.044);transform-origin:right center;">330</div>
<div class="t" style="top:1063.01px;font-size:11.5px;color:#262626;left:584.02px;transform:scaleX(0.946);transform-origin:right center;">10199</div>
<div class="t" style="top:1063.01px;font-size:11.5px;color:#262626;left:623.00px;transform:scaleX(0.978);transform-origin:left center;">08.12.2025</div>
<div class="t" style="top:1063.01px;font-size:11.5px;color:#262626;left:704.60px;transform:scaleX(1.014);transform-origin:left center;">Locke08.12</div>
<div class="t" style="top:1063.01px;font-size:11.5px;color:#262626;left:795.00px;transform:scaleX(1.061);transform-origin:left center;">Rechnung</div>
<div class="t" style="top:1063.01px;font-size:11.5px;color:#262626;left:912.53px;">15'161.03</div>
<div class="t" style="top:1063.01px;font-size:11.5px;color:#262626;left:969.20px;transform:scaleX(0.981);transform-origin:left center;">CHF</div>
<div class="t" style="top:1063.01px;font-size:11.5px;color:#262626;left:1132.40px;transform:scaleX(1.044);transform-origin:left center;">DHL</div>
<div class="t" style="top:1063.01px;font-size:11.5px;color:#27279a;left:1252.41px;transform:scaleX(1.061);transform-origin:right center;text-decoration:underline;text-underline-offset:1.6px;text-decoration-thickness:1.1px;">328</div>
<div class="t" style="top:1063.01px;font-size:11.5px;color:#27279a;left:1355.29px;text-decoration:underline;text-underline-offset:1.6px;text-decoration-thickness:1.1px;">0</div>
<div class="t" style="top:1063.01px;font-size:11.5px;color:#262626;left:1464.39px;">0</div>
<div class="t" style="top:1063.01px;font-size:11.5px;color:#262626;left:1563.79px;">0</div>
<div class="t" style="top:1063.01px;font-size:11.5px;color:#262626;left:1576.60px;transform:scaleX(0.970);transform-origin:left center;">08.12.2025 17:...</div>
<div class="t" style="top:1063.01px;font-size:11.5px;color:#262626;left:1667.60px;transform:scaleX(0.961);transform-origin:left center;">08.12.2025 17:...</div>
<div class="t" style="top:1063.01px;font-size:11.5px;color:#262626;left:1790.59px;">0</div>
<div class="t" style="top:1085.68px;font-size:11.5px;color:#262626;left:375.01px;transform:scaleX(1.044);transform-origin:right center;">329</div>
<div class="t" style="top:1085.68px;font-size:11.5px;color:#262626;left:584.02px;transform:scaleX(0.946);transform-origin:right center;">10197</div>
<div class="t" style="top:1085.68px;font-size:11.5px;color:#262626;left:623.00px;transform:scaleX(0.978);transform-origin:left center;">08.12.2025</div>
<div class="t" style="top:1085.68px;font-size:11.5px;color:#262626;left:704.60px;transform:scaleX(1.040);transform-origin:left center;">LockeContact...</div>
<div class="t" style="top:1085.68px;font-size:11.5px;color:#262626;left:795.00px;transform:scaleX(1.061);transform-origin:left center;">Rechnung</div>
<div class="t" style="top:1085.68px;font-size:11.5px;color:#262626;left:912.53px;">15'161.03</div>
<div class="t" style="top:1085.68px;font-size:11.5px;color:#262626;left:969.20px;transform:scaleX(0.981);transform-origin:left center;">CHF</div>
<div class="t" style="top:1085.68px;font-size:11.5px;color:#262626;left:1132.40px;transform:scaleX(1.044);transform-origin:left center;">DHL</div>
<div class="t" style="top:1085.68px;font-size:11.5px;color:#27279a;left:1252.41px;transform:scaleX(1.061);transform-origin:right center;text-decoration:underline;text-underline-offset:1.6px;text-decoration-thickness:1.1px;">328</div>
<div class="t" style="top:1085.68px;font-size:11.5px;color:#27279a;left:1355.29px;text-decoration:underline;text-underline-offset:1.6px;text-decoration-thickness:1.1px;">0</div>
<div class="t" style="top:1085.68px;font-size:11.5px;color:#262626;left:1464.39px;">0</div>
<div class="t" style="top:1085.68px;font-size:11.5px;color:#262626;left:1563.79px;">0</div>
<div class="t" style="top:1085.68px;font-size:11.5px;color:#262626;left:1576.60px;transform:scaleX(0.970);transform-origin:left center;">08.12.2025 17:...</div>
<div class="t" style="top:1085.68px;font-size:11.5px;color:#262626;left:1667.60px;transform:scaleX(0.961);transform-origin:left center;">08.12.2025 17:...</div>
<div class="t" style="top:1085.68px;font-size:11.5px;color:#262626;left:1790.59px;">0</div>
<div class="b" style="left:352.00px;top:1107.05px;width:1448.20px;height:22.67px;background:#f7f7f8;"></div>
<div class="t" style="top:1108.35px;font-size:11.5px;color:#262626;left:375.01px;transform:scaleX(1.044);transform-origin:right center;">327</div>
<div class="t" style="top:1108.35px;font-size:11.5px;color:#262626;left:584.02px;transform:scaleX(0.946);transform-origin:right center;">10195</div>
<div class="t" style="top:1108.35px;font-size:11.5px;color:#262626;left:623.00px;transform:scaleX(0.978);transform-origin:left center;">08.12.2025</div>
<div class="t" style="top:1108.35px;font-size:11.5px;color:#262626;left:704.60px;transform:scaleX(1.014);transform-origin:left center;">Locke08.12</div>
<div class="t" style="top:1108.35px;font-size:11.5px;color:#262626;left:795.00px;transform:scaleX(1.061);transform-origin:left center;">Rechnung</div>
<div class="t" style="top:1108.35px;font-size:11.5px;color:#262626;left:912.53px;">15'161.03</div>
<div class="t" style="top:1108.35px;font-size:11.5px;color:#262626;left:969.20px;transform:scaleX(0.981);transform-origin:left center;">CHF</div>
<div class="t" style="top:1108.35px;font-size:11.5px;color:#262626;left:1132.40px;transform:scaleX(1.044);transform-origin:left center;">DHL</div>
<div class="t" style="top:1108.35px;font-size:11.5px;color:#27279a;left:1252.41px;transform:scaleX(1.061);transform-origin:right center;text-decoration:underline;text-underline-offset:1.6px;text-decoration-thickness:1.1px;">328</div>
<div class="t" style="top:1108.35px;font-size:11.5px;color:#27279a;left:1355.29px;text-decoration:underline;text-underline-offset:1.6px;text-decoration-thickness:1.1px;">0</div>
<div class="t" style="top:1108.35px;font-size:11.5px;color:#262626;left:1464.39px;">0</div>
<div class="t" style="top:1108.35px;font-size:11.5px;color:#262626;left:1563.79px;">0</div>
<div class="t" style="top:1108.35px;font-size:11.5px;color:#262626;left:1576.60px;transform:scaleX(0.970);transform-origin:left center;">08.12.2025 16:...</div>
<div class="t" style="top:1108.35px;font-size:11.5px;color:#262626;left:1667.60px;transform:scaleX(0.961);transform-origin:left center;">08.12.2025 16:...</div>
<div class="t" style="top:1108.35px;font-size:11.5px;color:#262626;left:1790.59px;">0</div>
<div class="t" style="top:1131.01px;font-size:11.5px;color:#262626;left:375.01px;transform:scaleX(1.044);transform-origin:right center;">326</div>
<div class="t" style="top:1131.01px;font-size:11.5px;color:#262626;left:584.02px;transform:scaleX(0.946);transform-origin:right center;">10194</div>
<div class="t" style="top:1131.01px;font-size:11.5px;color:#262626;left:623.00px;transform:scaleX(0.978);transform-origin:left center;">08.12.2025</div>
<div class="t" style="top:1131.01px;font-size:11.5px;color:#262626;left:704.60px;transform:scaleX(1.014);transform-origin:left center;">Locke08.12</div>
<div class="t" style="top:1131.01px;font-size:11.5px;color:#262626;left:795.00px;transform:scaleX(1.061);transform-origin:left center;">Rechnung</div>
<div class="t" style="top:1131.01px;font-size:11.5px;color:#262626;left:912.53px;">15'161.03</div>
<div class="t" style="top:1131.01px;font-size:11.5px;color:#262626;left:969.20px;transform:scaleX(0.981);transform-origin:left center;">CHF</div>
<div class="t" style="top:1131.01px;font-size:11.5px;color:#262626;left:1132.40px;transform:scaleX(1.044);transform-origin:left center;">DHL</div>
<div class="t" style="top:1131.01px;font-size:11.5px;color:#27279a;left:1252.41px;transform:scaleX(1.061);transform-origin:right center;text-decoration:underline;text-underline-offset:1.6px;text-decoration-thickness:1.1px;">328</div>
<div class="t" style="top:1131.01px;font-size:11.5px;color:#27279a;left:1355.29px;text-decoration:underline;text-underline-offset:1.6px;text-decoration-thickness:1.1px;">0</div>
<div class="t" style="top:1131.01px;font-size:11.5px;color:#262626;left:1464.39px;">0</div>
<div class="t" style="top:1131.01px;font-size:11.5px;color:#262626;left:1563.79px;">0</div>
<div class="t" style="top:1131.01px;font-size:11.5px;color:#262626;left:1576.60px;transform:scaleX(0.970);transform-origin:left center;">08.12.2025 16:...</div>
<div class="t" style="top:1131.01px;font-size:11.5px;color:#262626;left:1667.60px;transform:scaleX(0.961);transform-origin:left center;">08.12.2025 16:...</div>
<div class="t" style="top:1131.01px;font-size:11.5px;color:#262626;left:1790.59px;">0</div>
<svg class="b" style="left:0;top:0" width="2308" height="1612" viewBox="0 0 2308 1612"><circle cx="424.5" cy="323.60" r="6.7" stroke="#79c95c" fill="none" stroke-width="1.3"/><path d="M421.7 323.90 L424.0 325.80 L427.6 322.00" stroke="#79c95c" fill="none" stroke-width="1.3"/><rect x="473.3" y="316.30" width="11.2" height="13.8" fill="none" stroke="#737982" stroke-width="1.25"/><rect x="473.0" y="315.90" width="11.8" height="2.4" fill="#5b616b"/><path d="M475.8 321.50 H482 M475.8 323.50 H482 M475.8 325.50 H482 M475.8 327.50 H482" stroke="#7d838b" stroke-width="0.9"/><circle cx="424.5" cy="346.27" r="6.7" stroke="#e8605a" fill="none" stroke-width="1.3"/><path d="M424.5 342.07 V347.17" stroke="#e8605a" stroke-width="1.4"/><circle cx="424.5" cy="349.07" r="0.85" fill="#e8605a"/><rect x="473.3" y="338.97" width="11.2" height="13.8" fill="none" stroke="#737982" stroke-width="1.25"/><rect x="473.0" y="338.57" width="11.8" height="2.4" fill="#5b616b"/><path d="M475.8 344.17 H482 M475.8 346.17 H482 M475.8 348.17 H482 M475.8 350.17 H482" stroke="#7d838b" stroke-width="0.9"/><circle cx="424.5" cy="368.93" r="6.7" stroke="#e8605a" fill="none" stroke-width="1.3"/><path d="M424.5 364.73 V369.83" stroke="#e8605a" stroke-width="1.4"/><circle cx="424.5" cy="371.73" r="0.85" fill="#e8605a"/><rect x="473.3" y="361.63" width="11.2" height="13.8" fill="none" stroke="#737982" stroke-width="1.25"/><rect x="473.0" y="361.23" width="11.8" height="2.4" fill="#5b616b"/><path d="M475.8 366.83 H482 M475.8 368.83 H482 M475.8 370.83 H482 M475.8 372.83 H482" stroke="#7d838b" stroke-width="0.9"/><circle cx="424.5" cy="391.60" r="6.7" stroke="#e8605a" fill="none" stroke-width="1.3"/><path d="M424.5 387.40 V392.50" stroke="#e8605a" stroke-width="1.4"/><circle cx="424.5" cy="394.40" r="0.85" fill="#e8605a"/><rect x="473.3" y="384.30" width="11.2" height="13.8" fill="none" stroke="#737982" stroke-width="1.25"/><rect x="473.0" y="383.90" width="11.8" height="2.4" fill="#5b616b"/><path d="M475.8 389.50 H482 M475.8 391.50 H482 M475.8 393.50 H482 M475.8 395.50 H482" stroke="#7d838b" stroke-width="0.9"/><circle cx="424.5" cy="414.27" r="6.7" stroke="#e8605a" fill="none" stroke-width="1.3"/><path d="M424.5 410.07 V415.17" stroke="#e8605a" stroke-width="1.4"/><circle cx="424.5" cy="417.07" r="0.85" fill="#e8605a"/><rect x="473.3" y="406.97" width="11.2" height="13.8" fill="none" stroke="#737982" stroke-width="1.25"/><rect x="473.0" y="406.57" width="11.8" height="2.4" fill="#5b616b"/><path d="M475.8 412.17 H482 M475.8 414.17 H482 M475.8 416.17 H482 M475.8 418.17 H482" stroke="#7d838b" stroke-width="0.9"/><circle cx="424.5" cy="436.93" r="6.7" stroke="#79c95c" fill="none" stroke-width="1.3"/><path d="M421.7 437.23 L424.0 439.13 L427.6 435.33" stroke="#79c95c" fill="none" stroke-width="1.3"/><rect x="473.3" y="429.63" width="11.2" height="13.8" fill="none" stroke="#737982" stroke-width="1.25"/><rect x="473.0" y="429.24" width="11.8" height="2.4" fill="#5b616b"/><path d="M475.8 434.83 H482 M475.8 436.83 H482 M475.8 438.83 H482 M475.8 440.83 H482" stroke="#7d838b" stroke-width="0.9"/><circle cx="424.5" cy="459.60" r="6.7" stroke="#79c95c" fill="none" stroke-width="1.3"/><path d="M421.7 459.90 L424.0 461.80 L427.6 458.00" stroke="#79c95c" fill="none" stroke-width="1.3"/><rect x="473.3" y="452.30" width="11.2" height="13.8" fill="none" stroke="#737982" stroke-width="1.25"/><rect x="473.0" y="451.90" width="11.8" height="2.4" fill="#5b616b"/><path d="M475.8 457.50 H482 M475.8 459.50 H482 M475.8 461.50 H482 M475.8 463.50 H482" stroke="#7d838b" stroke-width="0.9"/><circle cx="424.5" cy="482.27" r="6.7" stroke="#79c95c" fill="none" stroke-width="1.3"/><path d="M421.7 482.57 L424.0 484.47 L427.6 480.67" stroke="#79c95c" fill="none" stroke-width="1.3"/><rect x="473.3" y="474.97" width="11.2" height="13.8" fill="none" stroke="#737982" stroke-width="1.25"/><rect x="473.0" y="474.57" width="11.8" height="2.4" fill="#5b616b"/><path d="M475.8 480.17 H482 M475.8 482.17 H482 M475.8 484.17 H482 M475.8 486.17 H482" stroke="#7d838b" stroke-width="0.9"/><circle cx="424.5" cy="504.94" r="6.7" stroke="#79c95c" fill="none" stroke-width="1.3"/><path d="M421.7 505.24 L424.0 507.14 L427.6 503.34" stroke="#79c95c" fill="none" stroke-width="1.3"/><rect x="473.3" y="497.64" width="11.2" height="13.8" fill="none" stroke="#737982" stroke-width="1.25"/><rect x="473.0" y="497.24" width="11.8" height="2.4" fill="#5b616b"/><path d="M475.8 502.84 H482 M475.8 504.84 H482 M475.8 506.84 H482 M475.8 508.84 H482" stroke="#7d838b" stroke-width="0.9"/><circle cx="424.5" cy="527.60" r="6.7" stroke="#e8605a" fill="none" stroke-width="1.3"/><path d="M424.5 523.40 V528.50" stroke="#e8605a" stroke-width="1.4"/><circle cx="424.5" cy="530.40" r="0.85" fill="#e8605a"/><rect x="473.3" y="520.30" width="11.2" height="13.8" fill="none" stroke="#737982" stroke-width="1.25"/><rect x="473.0" y="519.90" width="11.8" height="2.4" fill="#5b616b"/><path d="M475.8 525.50 H482 M475.8 527.50 H482 M475.8 529.50 H482 M475.8 531.50 H482" stroke="#7d838b" stroke-width="0.9"/><circle cx="424.5" cy="550.27" r="6.7" stroke="#79c95c" fill="none" stroke-width="1.3"/><path d="M421.7 550.57 L424.0 552.47 L427.6 548.67" stroke="#79c95c" fill="none" stroke-width="1.3"/><rect x="473.3" y="542.97" width="11.2" height="13.8" fill="none" stroke="#737982" stroke-width="1.25"/><rect x="473.0" y="542.57" width="11.8" height="2.4" fill="#5b616b"/><path d="M475.8 548.17 H482 M475.8 550.17 H482 M475.8 552.17 H482 M475.8 554.17 H482" stroke="#7d838b" stroke-width="0.9"/><circle cx="424.5" cy="572.94" r="6.7" stroke="#79c95c" fill="none" stroke-width="1.3"/><path d="M421.7 573.24 L424.0 575.14 L427.6 571.34" stroke="#79c95c" fill="none" stroke-width="1.3"/><rect x="473.3" y="565.64" width="11.2" height="13.8" fill="none" stroke="#737982" stroke-width="1.25"/><rect x="473.0" y="565.24" width="11.8" height="2.4" fill="#5b616b"/><path d="M475.8 570.84 H482 M475.8 572.84 H482 M475.8 574.84 H482 M475.8 576.84 H482" stroke="#7d838b" stroke-width="0.9"/><circle cx="424.5" cy="595.60" r="6.7" stroke="#79c95c" fill="none" stroke-width="1.3"/><path d="M421.7 595.90 L424.0 597.80 L427.6 594.00" stroke="#79c95c" fill="none" stroke-width="1.3"/><rect x="473.3" y="588.30" width="11.2" height="13.8" fill="none" stroke="#737982" stroke-width="1.25"/><rect x="473.0" y="587.90" width="11.8" height="2.4" fill="#5b616b"/><path d="M475.8 593.50 H482 M475.8 595.50 H482 M475.8 597.50 H482 M475.8 599.50 H482" stroke="#7d838b" stroke-width="0.9"/><circle cx="424.5" cy="618.27" r="6.7" stroke="#79c95c" fill="none" stroke-width="1.3"/><path d="M421.7 618.57 L424.0 620.47 L427.6 616.67" stroke="#79c95c" fill="none" stroke-width="1.3"/><rect x="473.3" y="610.97" width="11.2" height="13.8" fill="none" stroke="#737982" stroke-width="1.25"/><rect x="473.0" y="610.57" width="11.8" height="2.4" fill="#5b616b"/><path d="M475.8 616.17 H482 M475.8 618.17 H482 M475.8 620.17 H482 M475.8 622.17 H482" stroke="#7d838b" stroke-width="0.9"/><circle cx="424.5" cy="640.94" r="6.7" stroke="#79c95c" fill="none" stroke-width="1.3"/><path d="M421.7 641.24 L424.0 643.14 L427.6 639.34" stroke="#79c95c" fill="none" stroke-width="1.3"/><rect x="473.3" y="633.64" width="11.2" height="13.8" fill="none" stroke="#737982" stroke-width="1.25"/><rect x="473.0" y="633.24" width="11.8" height="2.4" fill="#5b616b"/><path d="M475.8 638.84 H482 M475.8 640.84 H482 M475.8 642.84 H482 M475.8 644.84 H482" stroke="#7d838b" stroke-width="0.9"/><circle cx="424.5" cy="663.60" r="6.7" stroke="#79c95c" fill="none" stroke-width="1.3"/><path d="M421.7 663.90 L424.0 665.80 L427.6 662.00" stroke="#79c95c" fill="none" stroke-width="1.3"/><rect x="473.3" y="656.30" width="11.2" height="13.8" fill="none" stroke="#737982" stroke-width="1.25"/><rect x="473.0" y="655.90" width="11.8" height="2.4" fill="#5b616b"/><path d="M475.8 661.50 H482 M475.8 663.50 H482 M475.8 665.50 H482 M475.8 667.50 H482" stroke="#7d838b" stroke-width="0.9"/><circle cx="424.5" cy="686.27" r="6.7" stroke="#79c95c" fill="none" stroke-width="1.3"/><path d="M421.7 686.57 L424.0 688.47 L427.6 684.67" stroke="#79c95c" fill="none" stroke-width="1.3"/><rect x="473.3" y="678.97" width="11.2" height="13.8" fill="none" stroke="#737982" stroke-width="1.25"/><rect x="473.0" y="678.57" width="11.8" height="2.4" fill="#5b616b"/><path d="M475.8 684.17 H482 M475.8 686.17 H482 M475.8 688.17 H482 M475.8 690.17 H482" stroke="#7d838b" stroke-width="0.9"/><circle cx="424.5" cy="708.94" r="6.7" stroke="#e8605a" fill="none" stroke-width="1.3"/><path d="M424.5 704.74 V709.84" stroke="#e8605a" stroke-width="1.4"/><circle cx="424.5" cy="711.74" r="0.85" fill="#e8605a"/><rect x="473.3" y="701.64" width="11.2" height="13.8" fill="none" stroke="#737982" stroke-width="1.25"/><rect x="473.0" y="701.24" width="11.8" height="2.4" fill="#5b616b"/><path d="M475.8 706.84 H482 M475.8 708.84 H482 M475.8 710.84 H482 M475.8 712.84 H482" stroke="#7d838b" stroke-width="0.9"/><circle cx="424.5" cy="731.61" r="6.7" stroke="#79c95c" fill="none" stroke-width="1.3"/><path d="M421.7 731.91 L424.0 733.81 L427.6 730.01" stroke="#79c95c" fill="none" stroke-width="1.3"/><rect x="473.3" y="724.31" width="11.2" height="13.8" fill="none" stroke="#737982" stroke-width="1.25"/><rect x="473.0" y="723.91" width="11.8" height="2.4" fill="#5b616b"/><path d="M475.8 729.51 H482 M475.8 731.51 H482 M475.8 733.51 H482 M475.8 735.51 H482" stroke="#7d838b" stroke-width="0.9"/><circle cx="424.5" cy="754.27" r="6.7" stroke="#e8605a" fill="none" stroke-width="1.3"/><path d="M424.5 750.07 V755.17" stroke="#e8605a" stroke-width="1.4"/><circle cx="424.5" cy="757.07" r="0.85" fill="#e8605a"/><rect x="473.3" y="746.97" width="11.2" height="13.8" fill="none" stroke="#737982" stroke-width="1.25"/><rect x="473.0" y="746.57" width="11.8" height="2.4" fill="#5b616b"/><path d="M475.8 752.17 H482 M475.8 754.17 H482 M475.8 756.17 H482 M475.8 758.17 H482" stroke="#7d838b" stroke-width="0.9"/><circle cx="424.5" cy="776.94" r="6.7" stroke="#79c95c" fill="none" stroke-width="1.3"/><path d="M421.7 777.24 L424.0 779.14 L427.6 775.34" stroke="#79c95c" fill="none" stroke-width="1.3"/><rect x="473.3" y="769.64" width="11.2" height="13.8" fill="none" stroke="#737982" stroke-width="1.25"/><rect x="473.0" y="769.24" width="11.8" height="2.4" fill="#5b616b"/><path d="M475.8 774.84 H482 M475.8 776.84 H482 M475.8 778.84 H482 M475.8 780.84 H482" stroke="#7d838b" stroke-width="0.9"/><circle cx="424.5" cy="799.61" r="6.7" stroke="#e8605a" fill="none" stroke-width="1.3"/><path d="M424.5 795.41 V800.51" stroke="#e8605a" stroke-width="1.4"/><circle cx="424.5" cy="802.41" r="0.85" fill="#e8605a"/><rect x="473.3" y="792.31" width="11.2" height="13.8" fill="none" stroke="#737982" stroke-width="1.25"/><rect x="473.0" y="791.91" width="11.8" height="2.4" fill="#5b616b"/><path d="M475.8 797.51 H482 M475.8 799.51 H482 M475.8 801.51 H482 M475.8 803.51 H482" stroke="#7d838b" stroke-width="0.9"/><circle cx="424.5" cy="822.27" r="6.7" stroke="#79c95c" fill="none" stroke-width="1.3"/><path d="M421.7 822.57 L424.0 824.47 L427.6 820.67" stroke="#79c95c" fill="none" stroke-width="1.3"/><rect x="473.3" y="814.97" width="11.2" height="13.8" fill="none" stroke="#737982" stroke-width="1.25"/><rect x="473.0" y="814.57" width="11.8" height="2.4" fill="#5b616b"/><path d="M475.8 820.17 H482 M475.8 822.17 H482 M475.8 824.17 H482 M475.8 826.17 H482" stroke="#7d838b" stroke-width="0.9"/><circle cx="424.5" cy="844.94" r="6.7" stroke="#e8605a" fill="none" stroke-width="1.3"/><path d="M424.5 840.74 V845.84" stroke="#e8605a" stroke-width="1.4"/><circle cx="424.5" cy="847.74" r="0.85" fill="#e8605a"/><rect x="473.3" y="837.64" width="11.2" height="13.8" fill="none" stroke="#737982" stroke-width="1.25"/><rect x="473.0" y="837.24" width="11.8" height="2.4" fill="#5b616b"/><path d="M475.8 842.84 H482 M475.8 844.84 H482 M475.8 846.84 H482 M475.8 848.84 H482" stroke="#7d838b" stroke-width="0.9"/><circle cx="424.5" cy="867.61" r="6.7" stroke="#79c95c" fill="none" stroke-width="1.3"/><path d="M421.7 867.91 L424.0 869.81 L427.6 866.01" stroke="#79c95c" fill="none" stroke-width="1.3"/><rect x="473.3" y="860.31" width="11.2" height="13.8" fill="none" stroke="#737982" stroke-width="1.25"/><rect x="473.0" y="859.91" width="11.8" height="2.4" fill="#5b616b"/><path d="M475.8 865.51 H482 M475.8 867.51 H482 M475.8 869.51 H482 M475.8 871.51 H482" stroke="#7d838b" stroke-width="0.9"/><circle cx="424.5" cy="890.27" r="6.7" stroke="#79c95c" fill="none" stroke-width="1.3"/><path d="M421.7 890.57 L424.0 892.48 L427.6 888.67" stroke="#79c95c" fill="none" stroke-width="1.3"/><rect x="473.3" y="882.98" width="11.2" height="13.8" fill="none" stroke="#737982" stroke-width="1.25"/><rect x="473.0" y="882.58" width="11.8" height="2.4" fill="#5b616b"/><path d="M475.8 888.18 H482 M475.8 890.18 H482 M475.8 892.18 H482 M475.8 894.18 H482" stroke="#7d838b" stroke-width="0.9"/><circle cx="424.5" cy="912.94" r="6.7" stroke="#e8605a" fill="none" stroke-width="1.3"/><path d="M424.5 908.74 V913.84" stroke="#e8605a" stroke-width="1.4"/><circle cx="424.5" cy="915.74" r="0.85" fill="#e8605a"/><rect x="473.3" y="905.64" width="11.2" height="13.8" fill="none" stroke="#737982" stroke-width="1.25"/><rect x="473.0" y="905.24" width="11.8" height="2.4" fill="#5b616b"/><path d="M475.8 910.84 H482 M475.8 912.84 H482 M475.8 914.84 H482 M475.8 916.84 H482" stroke="#7d838b" stroke-width="0.9"/><circle cx="424.5" cy="935.61" r="6.7" stroke="#e8605a" fill="none" stroke-width="1.3"/><path d="M424.5 931.41 V936.51" stroke="#e8605a" stroke-width="1.4"/><circle cx="424.5" cy="938.41" r="0.85" fill="#e8605a"/><rect x="473.3" y="928.31" width="11.2" height="13.8" fill="none" stroke="#737982" stroke-width="1.25"/><rect x="473.0" y="927.91" width="11.8" height="2.4" fill="#5b616b"/><path d="M475.8 933.51 H482 M475.8 935.51 H482 M475.8 937.51 H482 M475.8 939.51 H482" stroke="#7d838b" stroke-width="0.9"/><circle cx="424.5" cy="958.28" r="6.7" stroke="#e8605a" fill="none" stroke-width="1.3"/><path d="M424.5 954.08 V959.18" stroke="#e8605a" stroke-width="1.4"/><circle cx="424.5" cy="961.08" r="0.85" fill="#e8605a"/><rect x="473.3" y="950.98" width="11.2" height="13.8" fill="none" stroke="#737982" stroke-width="1.25"/><rect x="473.0" y="950.58" width="11.8" height="2.4" fill="#5b616b"/><path d="M475.8 956.18 H482 M475.8 958.18 H482 M475.8 960.18 H482 M475.8 962.18 H482" stroke="#7d838b" stroke-width="0.9"/><circle cx="424.5" cy="980.94" r="6.7" stroke="#79c95c" fill="none" stroke-width="1.3"/><path d="M421.7 981.24 L424.0 983.14 L427.6 979.34" stroke="#79c95c" fill="none" stroke-width="1.3"/><rect x="473.3" y="973.64" width="11.2" height="13.8" fill="none" stroke="#737982" stroke-width="1.25"/><rect x="473.0" y="973.24" width="11.8" height="2.4" fill="#5b616b"/><path d="M475.8 978.84 H482 M475.8 980.84 H482 M475.8 982.84 H482 M475.8 984.84 H482" stroke="#7d838b" stroke-width="0.9"/><circle cx="424.5" cy="1003.61" r="6.7" stroke="#79c95c" fill="none" stroke-width="1.3"/><path d="M421.7 1003.91 L424.0 1005.81 L427.6 1002.01" stroke="#79c95c" fill="none" stroke-width="1.3"/><rect x="473.3" y="996.31" width="11.2" height="13.8" fill="none" stroke="#737982" stroke-width="1.25"/><rect x="473.0" y="995.91" width="11.8" height="2.4" fill="#5b616b"/><path d="M475.8 1001.51 H482 M475.8 1003.51 H482 M475.8 1005.51 H482 M475.8 1007.51 H482" stroke="#7d838b" stroke-width="0.9"/><circle cx="424.5" cy="1026.28" r="6.7" stroke="#79c95c" fill="none" stroke-width="1.3"/><path d="M421.7 1026.58 L424.0 1028.48 L427.6 1024.68" stroke="#79c95c" fill="none" stroke-width="1.3"/><rect x="473.3" y="1018.98" width="11.2" height="13.8" fill="none" stroke="#737982" stroke-width="1.25"/><rect x="473.0" y="1018.58" width="11.8" height="2.4" fill="#5b616b"/><path d="M475.8 1024.18 H482 M475.8 1026.18 H482 M475.8 1028.18 H482 M475.8 1030.18 H482" stroke="#7d838b" stroke-width="0.9"/><circle cx="424.5" cy="1048.94" r="6.7" stroke="#79c95c" fill="none" stroke-width="1.3"/><path d="M421.7 1049.24 L424.0 1051.14 L427.6 1047.34" stroke="#79c95c" fill="none" stroke-width="1.3"/><rect x="473.3" y="1041.64" width="11.2" height="13.8" fill="none" stroke="#737982" stroke-width="1.25"/><rect x="473.0" y="1041.24" width="11.8" height="2.4" fill="#5b616b"/><path d="M475.8 1046.84 H482 M475.8 1048.84 H482 M475.8 1050.84 H482 M475.8 1052.84 H482" stroke="#7d838b" stroke-width="0.9"/><circle cx="424.5" cy="1071.61" r="6.7" stroke="#79c95c" fill="none" stroke-width="1.3"/><path d="M421.7 1071.91 L424.0 1073.81 L427.6 1070.01" stroke="#79c95c" fill="none" stroke-width="1.3"/><rect x="473.3" y="1064.31" width="11.2" height="13.8" fill="none" stroke="#737982" stroke-width="1.25"/><rect x="473.0" y="1063.91" width="11.8" height="2.4" fill="#5b616b"/><path d="M475.8 1069.51 H482 M475.8 1071.51 H482 M475.8 1073.51 H482 M475.8 1075.51 H482" stroke="#7d838b" stroke-width="0.9"/><circle cx="424.5" cy="1094.28" r="6.7" stroke="#79c95c" fill="none" stroke-width="1.3"/><path d="M421.7 1094.58 L424.0 1096.48 L427.6 1092.68" stroke="#79c95c" fill="none" stroke-width="1.3"/><rect x="473.3" y="1086.98" width="11.2" height="13.8" fill="none" stroke="#737982" stroke-width="1.25"/><rect x="473.0" y="1086.58" width="11.8" height="2.4" fill="#5b616b"/><path d="M475.8 1092.18 H482 M475.8 1094.18 H482 M475.8 1096.18 H482 M475.8 1098.18 H482" stroke="#7d838b" stroke-width="0.9"/><circle cx="424.5" cy="1116.95" r="6.7" stroke="#e8605a" fill="none" stroke-width="1.3"/><path d="M424.5 1112.75 V1117.85" stroke="#e8605a" stroke-width="1.4"/><circle cx="424.5" cy="1119.75" r="0.85" fill="#e8605a"/><rect x="473.3" y="1109.64" width="11.2" height="13.8" fill="none" stroke="#737982" stroke-width="1.25"/><rect x="473.0" y="1109.24" width="11.8" height="2.4" fill="#5b616b"/><path d="M475.8 1114.85 H482 M475.8 1116.85 H482 M475.8 1118.85 H482 M475.8 1120.85 H482" stroke="#7d838b" stroke-width="0.9"/><circle cx="424.5" cy="1139.61" r="6.7" stroke="#e8605a" fill="none" stroke-width="1.3"/><path d="M424.5 1135.41 V1140.51" stroke="#e8605a" stroke-width="1.4"/><circle cx="424.5" cy="1142.41" r="0.85" fill="#e8605a"/><rect x="473.3" y="1132.31" width="11.2" height="13.8" fill="none" stroke="#737982" stroke-width="1.25"/><rect x="473.0" y="1131.91" width="11.8" height="2.4" fill="#5b616b"/><path d="M475.8 1137.51 H482 M475.8 1139.51 H482 M475.8 1141.51 H482 M475.8 1143.51 H482" stroke="#7d838b" stroke-width="0.9"/></svg>
</div></div>
<div class="b" style="left:351.00px;top:287.70px;width:1.00px;height:875.10px;background:#d3d3d6;"></div>
<div class="b" style="left:351.60px;top:1141.00px;width:1854.40px;height:1.00px;background:#d6d6d9;"></div>
<div class="b" style="left:352.60px;top:1142.00px;width:1853.40px;height:20.40px;background:#ffffff;"></div>
<div class="b" style="left:351.60px;top:1162.20px;width:1854.40px;height:1.00px;background:#d6d6d9;"></div>
<div class="t" style="top:1140.80px;font-size:11px;color:#6b6b6b;left:355.90px;transform:scaleX(0.940);transform-origin:left center;">Process</div>
<div class="t" style="top:1140.80px;font-size:11px;color:#6b6b6b;left:411.00px;transform:scaleX(0.975);transform-origin:left center;">Delete record</div>
<div class="b" style="left:1486.60px;top:1166.90px;width:17.40px;height:1.00px;background:#cfcfd1;"></div>
<div class="b" style="left:351.60px;top:1194.50px;width:1854.40px;height:305.50px;background:#f9f9f9;"></div>
<div class="b" style="left:351.60px;top:1194.30px;width:1854.40px;height:1.00px;background:#d3d3d6;"></div>
<div class="b" style="left:351.00px;top:1194.30px;width:1.00px;height:305.70px;background:#d3d3d6;"></div>
<div class="b" style="left:394.10px;top:1172.90px;width:79.10px;height:22.60px;background:#fafafa;border:1px solid #d3d3d6;box-sizing:border-box;border-bottom:none;border-radius:2px 2px 0 0;"></div>
<div class="t" style="top:1176.40px;font-size:12.3px;color:#858a91;left:363.40px;transform:scaleX(1.014);transform-origin:left center;">Info</div>
<div class="t" style="top:1176.40px;font-size:12.3px;color:#2b2b2b;left:405.90px;transform:scaleX(0.967);transform-origin:left center;">Addresses</div>
<div class="t" style="top:1176.40px;font-size:12.3px;color:#858a91;left:482.20px;transform:scaleX(1.028);transform-origin:left center;">Comment</div>
<div class="t" style="top:1176.40px;font-size:12.3px;color:#858a91;left:557.60px;">Header data</div>
<div class="t" style="top:1176.40px;font-size:12.3px;color:#858a91;left:645.60px;transform:scaleX(1.042);transform-origin:left center;">Items</div>
<div class="t" style="top:1176.40px;font-size:12.3px;color:#858a91;left:696.90px;transform:scaleX(1.029);transform-origin:left center;">Attachments</div>
<div class="b" style="left:353.00px;top:1196.20px;width:253.80px;height:301.80px;background:#ffffff;border:1px solid #d3d3d6;box-sizing:border-box;"></div>
<div class="b" style="left:370.10px;top:1197.20px;width:157.40px;height:19.60px;background:#dcdcdc;"></div>
<svg class="b" style="left:0;top:0" width="2308" height="1612" viewBox="0 0 2308 1612"><path d="M357.6 1205.5 L361.4 1209.4 L365.2 1205.5" fill="none" stroke="#3a3a3a" stroke-width="1.2"/><path d="M359.6 1283.2 L363.4 1287.0 L359.6 1290.8" fill="none" stroke="#3a3a3a" stroke-width="1.2"/><circle cx="380.9" cy="1207.0" r="4.6" fill="#737a84"/><circle cx="380.9" cy="1286.9" r="4.6" fill="#737a84"/><circle cx="397.3" cy="1226.9" r="4.6" fill="#5dc388"/><circle cx="397.3" cy="1246.8" r="4.6" fill="#5dc388"/><circle cx="397.3" cy="1267.0" r="4.6" fill="#5dc388"/></svg>
<div class="t" style="top:1197.20px;font-size:12.3px;color:#2b2b2b;left:393.40px;transform:scaleX(0.962);transform-origin:left center;">Customer data (DNR:72)</div>
<div class="t" style="top:1216.90px;font-size:12.3px;color:#2b2b2b;left:409.80px;transform:scaleX(0.978);transform-origin:left center;">Customer address</div>
<div class="t" style="top:1236.80px;font-size:12.3px;color:#2b2b2b;left:409.80px;transform:scaleX(0.984);transform-origin:left center;">Supplier address</div>
<div class="t" style="top:1257.00px;font-size:12.3px;color:#2b2b2b;left:409.80px;">Invoice address</div>
<div class="t" style="top:1276.90px;font-size:12.3px;color:#2b2b2b;left:393.40px;">Supplier data</div>
<div class="b" style="left:353.00px;top:1482.00px;width:253.80px;height:16.00px;background:#ececee;border:1px solid #d3d3d6;box-sizing:border-box;"></div>
<div class="b" style="left:368.00px;top:1483.00px;width:162.00px;height:14.00px;background:#f3f3f5;border-right:1px solid #dcdcde;box-sizing:border-box;"></div>
<div class="b" style="left:353.00px;top:1482.00px;width:15.20px;height:16.00px;background:#f5f5f7;border:1px solid #d3d3d6;box-sizing:border-box;"></div>
<div class="b" style="left:591.60px;top:1482.00px;width:15.20px;height:16.00px;background:#f5f5f7;border:1px solid #d3d3d6;box-sizing:border-box;"></div>
<svg class="b" style="left:0;top:0" width="2308" height="1612" viewBox="0 0 2308 1612"><path d="M358.2 1490.0 L362.0 1486.4 V1493.6 Z" fill="#b9bcc1"/><path d="M601.6 1490.0 L597.8 1486.4 V1493.6 Z" fill="#b9bcc1"/></svg>
<div class="b" style="left:606.30px;top:1196.20px;width:1.00px;height:303.80px;background:#d6d6d9;"></div>
<div class="b" style="left:614.20px;top:1219.30px;width:1.00px;height:241.90px;background:#d6d6d9;"></div>
<div class="b" style="left:609.90px;top:1337.70px;width:1.30px;height:17.60px;background:#cdcdd0;border-radius:1px;"></div>
<div class="b" style="left:345.90px;top:846.00px;width:1.30px;height:17.40px;background:#cfcfd2;border-radius:1px;"></div>
<div class="t" style="top:1197.50px;font-size:12.3px;color:#2b2b2b;left:614.20px;transform:scaleX(0.983);transform-origin:left center;">Customer address</div>
<div class="b" style="left:614.20px;top:1219.30px;width:230.40px;height:241.90px;background:#ffffff;border:1px solid #d3d3d6;box-sizing:border-box;"></div>
<div class="b" style="left:615.20px;top:1220.3px;width:228.40px;height:226px;overflow:hidden">
<div class="b" style="left:-615.20px;top:-1220.3px;width:2308px;height:1612px">
<div class="t" style="top:1219.90px;font-size:11.8px;color:#222222;left:617.40px;transform:scaleX(1.084);transform-origin:left center;">Herr</div>
<div class="t" style="top:1236.30px;font-size:11.8px;color:#222222;left:617.40px;transform:scaleX(1.040);transform-origin:left center;">Address testing company</div>
<div class="t" style="top:1252.70px;font-size:11.8px;color:#222222;left:617.40px;">Glärnischstrasse 1333</div>
<div class="t" style="top:1269.10px;font-size:11.8px;color:#222222;left:617.40px;transform:scaleX(0.940);transform-origin:left center;">CH-9500 Wil SG</div>
<div class="t" style="top:1285.50px;font-size:11.8px;color:#222222;left:617.40px;transform:scaleX(0.951);transform-origin:left center;">(INR: 356)</div>
</div></div>
<div class="b" style="left:614.20px;top:1464.00px;width:108.60px;height:24.30px;background:#ffffff;border:1px solid #cfcfd2;box-sizing:border-box;border-radius:3px;"></div>
<div class="t" style="top:1467.30px;font-size:12.3px;color:#2b2b2b;left:657.90px;">Edit</div>
<div class="t" style="top:1197.50px;font-size:12.3px;color:#2b2b2b;left:854.80px;transform:scaleX(0.976);transform-origin:left center;">Supplier address</div>
<div class="b" style="left:854.80px;top:1219.30px;width:230.60px;height:241.90px;background:#ffffff;border:1px solid #d3d3d6;box-sizing:border-box;"></div>
<div class="b" style="left:855.80px;top:1220.3px;width:228.60px;height:226px;overflow:hidden">
<div class="b" style="left:-855.80px;top:-1220.3px;width:2308px;height:1612px">
<div class="t" style="top:1219.90px;font-size:11.8px;color:#222222;left:858.00px;transform:scaleX(1.084);transform-origin:left center;">Herr</div>
<div class="t" style="top:1236.30px;font-size:11.8px;color:#222222;left:858.00px;transform:scaleX(1.043);transform-origin:left center;">Address testing company shipping</div>
<div class="t" style="top:1252.70px;font-size:11.8px;color:#222222;left:858.00px;transform:scaleX(1.040);transform-origin:left center;">MartinShippingTesting0912 LockeShipping</div>
<div class="t" style="top:1269.10px;font-size:11.8px;color:#222222;left:858.00px;">Glärnischstrasse 13334</div>
<div class="t" style="top:1285.50px;font-size:11.8px;color:#222222;left:858.00px;transform:scaleX(0.940);transform-origin:left center;">CH-9500 Wil SG</div>
<div class="t" style="top:1301.90px;font-size:11.8px;color:#222222;left:858.00px;transform:scaleX(0.958);transform-origin:left center;">(INR: 358, AKP:1/359)</div>
</div></div>
<div class="b" style="left:854.80px;top:1446.40px;width:230.60px;height:14.80px;background:#ececee;border:1px solid #d3d3d6;box-sizing:border-box;"></div>
<div class="b" style="left:869.80px;top:1447.40px;width:149.90px;height:12.80px;background:#f3f3f5;border-right:1px solid #dcdcde;box-sizing:border-box;"></div>
<div class="b" style="left:854.80px;top:1446.40px;width:15.20px;height:14.80px;background:#f5f5f7;border:1px solid #d3d3d6;box-sizing:border-box;"></div>
<div class="b" style="left:1070.20px;top:1446.40px;width:15.20px;height:14.80px;background:#f5f5f7;border:1px solid #d3d3d6;box-sizing:border-box;"></div>
<svg class="b" style="left:0;top:0" width="2308" height="1612" viewBox="0 0 2308 1612"><path d="M860.0 1453.8 L863.8 1450.2 V1457.4 Z" fill="#b9bcc1"/><path d="M1080.2 1453.8 L1076.4 1450.2 V1457.4 Z" fill="#b9bcc1"/></svg>
<div class="b" style="left:854.80px;top:1464.00px;width:107.80px;height:24.30px;background:#ffffff;border:1px solid #cfcfd2;box-sizing:border-box;border-radius:3px;"></div>
<div class="t" style="top:1467.30px;font-size:12.3px;color:#2b2b2b;left:898.10px;">Edit</div>
<div class="t" style="top:1197.50px;font-size:12.3px;color:#2b2b2b;left:1094.40px;transform:scaleX(0.982);transform-origin:left center;">Invoice address</div>
<div class="b" style="left:1094.40px;top:1219.30px;width:230.10px;height:241.90px;background:#ffffff;border:1px solid #d3d3d6;box-sizing:border-box;"></div>
<div class="b" style="left:1095.40px;top:1220.3px;width:228.10px;height:226px;overflow:hidden">
<div class="b" style="left:-1095.40px;top:-1220.3px;width:2308px;height:1612px">
<div class="t" style="top:1219.90px;font-size:11.8px;color:#222222;left:1097.60px;transform:scaleX(1.084);transform-origin:left center;">Herr</div>
<div class="t" style="top:1236.30px;font-size:11.8px;color:#222222;left:1097.60px;transform:scaleX(1.045);transform-origin:left center;">Address testing company billing</div>
<div class="t" style="top:1252.70px;font-size:11.8px;color:#222222;left:1097.60px;transform:scaleX(1.040);transform-origin:left center;">MartinBillingTesting0912 LockeBillingTesting</div>
<div class="t" style="top:1269.10px;font-size:11.8px;color:#222222;left:1097.60px;">Glärnischstrasse 133</div>
<div class="t" style="top:1285.50px;font-size:11.8px;color:#222222;left:1097.60px;transform:scaleX(0.940);transform-origin:left center;">CH-9500 Wil SG</div>
<div class="t" style="top:1301.90px;font-size:11.8px;color:#222222;left:1097.60px;transform:scaleX(0.958);transform-origin:left center;">(INR: 360, AKP:1/361)</div>
</div></div>
<div class="b" style="left:1094.40px;top:1446.40px;width:230.10px;height:14.80px;background:#ececee;border:1px solid #d3d3d6;box-sizing:border-box;"></div>
<div class="b" style="left:1109.40px;top:1447.40px;width:166.80px;height:12.80px;background:#f3f3f5;border-right:1px solid #dcdcde;box-sizing:border-box;"></div>
<div class="b" style="left:1094.40px;top:1446.40px;width:15.20px;height:14.80px;background:#f5f5f7;border:1px solid #d3d3d6;box-sizing:border-box;"></div>
<div class="b" style="left:1309.30px;top:1446.40px;width:15.20px;height:14.80px;background:#f5f5f7;border:1px solid #d3d3d6;box-sizing:border-box;"></div>
<svg class="b" style="left:0;top:0" width="2308" height="1612" viewBox="0 0 2308 1612"><path d="M1099.6 1453.8 L1103.4 1450.2 V1457.4 Z" fill="#b9bcc1"/><path d="M1319.3 1453.8 L1315.5 1450.2 V1457.4 Z" fill="#b9bcc1"/></svg>
<div class="b" style="left:1094.40px;top:1464.00px;width:107.70px;height:24.30px;background:#ffffff;border:1px solid #cfcfd2;box-sizing:border-box;border-radius:3px;"></div>
<div class="t" style="top:1467.30px;font-size:12.3px;color:#2b2b2b;left:1137.65px;">Edit</div>
<div class="b" style="left:102.00px;top:1499.00px;width:2104.00px;height:1.00px;background:#cdcdd0;"></div>
<div class="b" style="left:102.00px;top:1500.00px;width:2104.00px;height:5.00px;background:#f3f3f4;"></div>
<div class="b" style="left:102.00px;top:1505.00px;width:2104.00px;height:1.00px;background:#fcfcfc;"></div>
<div class="b" style="left:102.00px;top:1506.00px;width:2104.00px;height:2.00px;background:#303030;"></div>
<div class="b" style="left:102.00px;top:1508.00px;width:2104.00px;height:2.00px;background:#282828;"></div>
<svg class="b" style="left:0;top:0" width="2308" height="1612" viewBox="0 0 2308 1612"><path d="M392.4 214.2 L392.4 227.8 L395.7 224.8 L398.0 229.8 L400.0 228.9 L397.8 224.1 L401.8 223.9 Z" fill="#2a2a2a" stroke="#f4f4f4" stroke-width="0.7" stroke-linejoin="round"/></svg>
</div>
</body></html>
